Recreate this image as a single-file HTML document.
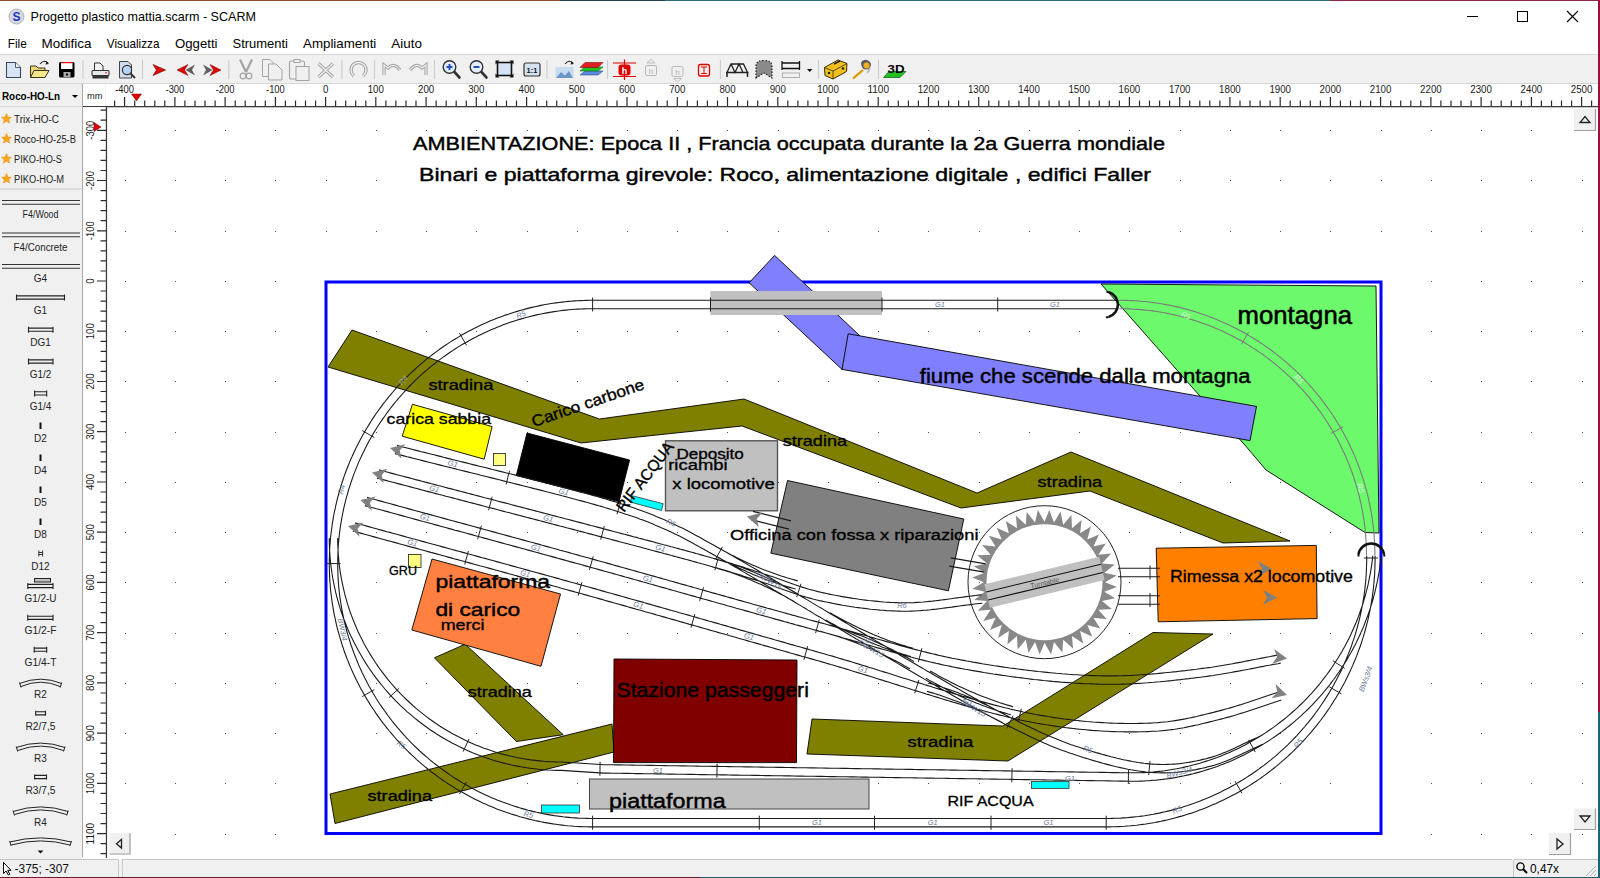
<!DOCTYPE html>
<html><head><meta charset="utf-8"><style>
html,body{margin:0;padding:0;background:#fff;overflow:hidden;}
svg{display:block;font-family:"Liberation Sans", sans-serif;}
</style></head><body>
<svg width="1600" height="878" viewBox="0 0 1600 878">
<rect x="0" y="0" width="1600" height="878" fill="#ffffff"/>
<rect x="0" y="0" width="560" height="1" fill="#8a4e30"/><rect x="560" y="0" width="105" height="1" fill="#24404a"/><rect x="665" y="0" width="665" height="1" fill="#2f6c80"/><rect x="1330" y="0" width="270" height="1" fill="#8c2848"/>
<rect x="1598" y="0" width="2" height="712" fill="#9a1038"/><rect x="1598" y="712" width="2" height="166" fill="#1e6478"/>
<rect x="0" y="877" width="700" height="1" fill="#6a1a30"/><rect x="700" y="877" width="900" height="1" fill="#1a5a70"/>
<circle cx="16.5" cy="16.5" r="7.5" fill="#d8d8e0" stroke="#b0b0b8" stroke-width="1"/>
<text x="16.5" y="21" font-size="12" font-weight="bold" fill="#2030c0" text-anchor="middle" style="font-family:"Liberation Sans", sans-serif">S</text>
<text x="30.5" y="21.0" font-size="12.4" fill="#000" text-anchor="start" font-weight="normal" textLength="225.5" lengthAdjust="spacingAndGlyphs">Progetto plastico mattia.scarm - SCARM</text>
<rect x="1467" y="16" width="11" height="1" fill="#000"/>
<rect x="1517.5" y="11.5" width="10" height="10" fill="none" stroke="#000" stroke-width="1"/>
<path d="M1567,11 L1578,22 M1578,11 L1567,22" stroke="#000" stroke-width="1.1"/>
<text x="7.8" y="48.0" font-size="12.6" fill="#000" text-anchor="start" font-weight="normal" textLength="19.0" lengthAdjust="spacingAndGlyphs">File</text>
<text x="41.5" y="48.0" font-size="12.6" fill="#000" text-anchor="start" font-weight="normal" textLength="50.0" lengthAdjust="spacingAndGlyphs">Modifica</text>
<text x="106.8" y="48.0" font-size="12.6" fill="#000" text-anchor="start" font-weight="normal" textLength="52.7" lengthAdjust="spacingAndGlyphs">Visualizza</text>
<text x="175.0" y="48.0" font-size="12.6" fill="#000" text-anchor="start" font-weight="normal" textLength="42.5" lengthAdjust="spacingAndGlyphs">Oggetti</text>
<text x="232.5" y="48.0" font-size="12.6" fill="#000" text-anchor="start" font-weight="normal" textLength="55.5" lengthAdjust="spacingAndGlyphs">Strumenti</text>
<text x="303.0" y="48.0" font-size="12.6" fill="#000" text-anchor="start" font-weight="normal" textLength="73.3" lengthAdjust="spacingAndGlyphs">Ampliamenti</text>
<text x="391.3" y="48.0" font-size="12.6" fill="#000" text-anchor="start" font-weight="normal" textLength="30.7" lengthAdjust="spacingAndGlyphs">Aiuto</text>
<rect x="0" y="54" width="1598" height="30" fill="#f0f0f0"/>
<rect x="0" y="54" width="1598" height="1" fill="#dadada"/>
<rect x="0" y="83" width="1598" height="1" fill="#d6d6d6"/>
<rect x="82.5" y="60" width="1" height="19" fill="#c8c8c8"/>
<rect x="142.0" y="60" width="1" height="19" fill="#c8c8c8"/>
<rect x="228.3" y="60" width="1" height="19" fill="#c8c8c8"/>
<rect x="341.4" y="60" width="1" height="19" fill="#c8c8c8"/>
<rect x="374.1" y="60" width="1" height="19" fill="#c8c8c8"/>
<rect x="434.0" y="60" width="1" height="19" fill="#c8c8c8"/>
<rect x="546.5" y="60" width="1" height="19" fill="#c8c8c8"/>
<rect x="607.1" y="60" width="1" height="19" fill="#c8c8c8"/>
<rect x="719.9" y="60" width="1" height="19" fill="#c8c8c8"/>
<rect x="818.0" y="60" width="1" height="19" fill="#c8c8c8"/>
<rect x="878.0" y="60" width="1" height="19" fill="#c8c8c8"/>
<rect x="0" y="84" width="82" height="775" fill="#f0f0f0"/>
<rect x="82" y="84" width="1" height="773" fill="#a8a8a8"/>
<text x="2.0" y="100.0" font-size="11" fill="#000" text-anchor="start" font-weight="bold" textLength="58.0" lengthAdjust="spacingAndGlyphs">Roco-HO-Ln</text>
<path d="M72,95 L78,95 L75,98 Z" fill="#000"/>
<rect x="0" y="106" width="82" height="1" fill="#d8d8d8"/>
<rect x="83" y="84" width="23" height="22" fill="#ffffff"/>
<rect x="105.8" y="84" width="1.3" height="22" fill="#c8c8c8"/>
<text x="87.0" y="99.0" font-size="9.5" fill="#222" text-anchor="start" font-weight="normal" textLength="15.5" lengthAdjust="spacingAndGlyphs">mm</text>
<rect x="106" y="84" width="1492" height="22" fill="#ffffff"/>
<rect x="83" y="106" width="1515" height="1.3" fill="#3c3c3c"/>
<text x="124.6" y="93.0" font-size="10" fill="#1a1a1a" text-anchor="middle" font-weight="normal" textLength="18.8" lengthAdjust="spacingAndGlyphs">-400</text>
<text x="174.9" y="93.0" font-size="10" fill="#1a1a1a" text-anchor="middle" font-weight="normal" textLength="18.8" lengthAdjust="spacingAndGlyphs">-300</text>
<text x="225.1" y="93.0" font-size="10" fill="#1a1a1a" text-anchor="middle" font-weight="normal" textLength="18.8" lengthAdjust="spacingAndGlyphs">-200</text>
<text x="275.4" y="93.0" font-size="10" fill="#1a1a1a" text-anchor="middle" font-weight="normal" textLength="18.8" lengthAdjust="spacingAndGlyphs">-100</text>
<text x="325.6" y="93.0" font-size="10" fill="#1a1a1a" text-anchor="middle" font-weight="normal" textLength="5.4" lengthAdjust="spacingAndGlyphs">0</text>
<text x="375.8" y="93.0" font-size="10" fill="#1a1a1a" text-anchor="middle" font-weight="normal" textLength="16.2" lengthAdjust="spacingAndGlyphs">100</text>
<text x="426.1" y="93.0" font-size="10" fill="#1a1a1a" text-anchor="middle" font-weight="normal" textLength="16.2" lengthAdjust="spacingAndGlyphs">200</text>
<text x="476.3" y="93.0" font-size="10" fill="#1a1a1a" text-anchor="middle" font-weight="normal" textLength="16.2" lengthAdjust="spacingAndGlyphs">300</text>
<text x="526.6" y="93.0" font-size="10" fill="#1a1a1a" text-anchor="middle" font-weight="normal" textLength="16.2" lengthAdjust="spacingAndGlyphs">400</text>
<text x="576.8" y="93.0" font-size="10" fill="#1a1a1a" text-anchor="middle" font-weight="normal" textLength="16.2" lengthAdjust="spacingAndGlyphs">500</text>
<text x="627.0" y="93.0" font-size="10" fill="#1a1a1a" text-anchor="middle" font-weight="normal" textLength="16.2" lengthAdjust="spacingAndGlyphs">600</text>
<text x="677.3" y="93.0" font-size="10" fill="#1a1a1a" text-anchor="middle" font-weight="normal" textLength="16.2" lengthAdjust="spacingAndGlyphs">700</text>
<text x="727.5" y="93.0" font-size="10" fill="#1a1a1a" text-anchor="middle" font-weight="normal" textLength="16.2" lengthAdjust="spacingAndGlyphs">800</text>
<text x="777.8" y="93.0" font-size="10" fill="#1a1a1a" text-anchor="middle" font-weight="normal" textLength="16.2" lengthAdjust="spacingAndGlyphs">900</text>
<text x="828.0" y="93.0" font-size="10" fill="#1a1a1a" text-anchor="middle" font-weight="normal" textLength="21.6" lengthAdjust="spacingAndGlyphs">1000</text>
<text x="878.2" y="93.0" font-size="10" fill="#1a1a1a" text-anchor="middle" font-weight="normal" textLength="21.6" lengthAdjust="spacingAndGlyphs">1100</text>
<text x="928.5" y="93.0" font-size="10" fill="#1a1a1a" text-anchor="middle" font-weight="normal" textLength="21.6" lengthAdjust="spacingAndGlyphs">1200</text>
<text x="978.7" y="93.0" font-size="10" fill="#1a1a1a" text-anchor="middle" font-weight="normal" textLength="21.6" lengthAdjust="spacingAndGlyphs">1300</text>
<text x="1029.0" y="93.0" font-size="10" fill="#1a1a1a" text-anchor="middle" font-weight="normal" textLength="21.6" lengthAdjust="spacingAndGlyphs">1400</text>
<text x="1079.2" y="93.0" font-size="10" fill="#1a1a1a" text-anchor="middle" font-weight="normal" textLength="21.6" lengthAdjust="spacingAndGlyphs">1500</text>
<text x="1129.4" y="93.0" font-size="10" fill="#1a1a1a" text-anchor="middle" font-weight="normal" textLength="21.6" lengthAdjust="spacingAndGlyphs">1600</text>
<text x="1179.7" y="93.0" font-size="10" fill="#1a1a1a" text-anchor="middle" font-weight="normal" textLength="21.6" lengthAdjust="spacingAndGlyphs">1700</text>
<text x="1229.9" y="93.0" font-size="10" fill="#1a1a1a" text-anchor="middle" font-weight="normal" textLength="21.6" lengthAdjust="spacingAndGlyphs">1800</text>
<text x="1280.2" y="93.0" font-size="10" fill="#1a1a1a" text-anchor="middle" font-weight="normal" textLength="21.6" lengthAdjust="spacingAndGlyphs">1900</text>
<text x="1330.4" y="93.0" font-size="10" fill="#1a1a1a" text-anchor="middle" font-weight="normal" textLength="21.6" lengthAdjust="spacingAndGlyphs">2000</text>
<text x="1380.6" y="93.0" font-size="10" fill="#1a1a1a" text-anchor="middle" font-weight="normal" textLength="21.6" lengthAdjust="spacingAndGlyphs">2100</text>
<text x="1430.9" y="93.0" font-size="10" fill="#1a1a1a" text-anchor="middle" font-weight="normal" textLength="21.6" lengthAdjust="spacingAndGlyphs">2200</text>
<text x="1481.1" y="93.0" font-size="10" fill="#1a1a1a" text-anchor="middle" font-weight="normal" textLength="21.6" lengthAdjust="spacingAndGlyphs">2300</text>
<text x="1531.4" y="93.0" font-size="10" fill="#1a1a1a" text-anchor="middle" font-weight="normal" textLength="21.6" lengthAdjust="spacingAndGlyphs">2400</text>
<text x="1581.6" y="93.0" font-size="10" fill="#1a1a1a" text-anchor="middle" font-weight="normal" textLength="21.6" lengthAdjust="spacingAndGlyphs">2500</text>
<path d="M114.6,100.5V106 M124.6,97V106 M134.7,100.5V106 M144.7,100.5V106 M154.8,100.5V106 M164.8,100.5V106 M174.9,97V106 M184.9,100.5V106 M195.0,100.5V106 M205.0,100.5V106 M215.1,100.5V106 M225.1,97V106 M235.2,100.5V106 M245.2,100.5V106 M255.3,100.5V106 M265.3,100.5V106 M275.4,97V106 M285.4,100.5V106 M295.5,100.5V106 M305.5,100.5V106 M315.6,100.5V106 M325.6,97V106 M335.6,100.5V106 M345.7,100.5V106 M355.7,100.5V106 M365.8,100.5V106 M375.8,97V106 M385.9,100.5V106 M395.9,100.5V106 M406.0,100.5V106 M416.0,100.5V106 M426.1,97V106 M436.1,100.5V106 M446.2,100.5V106 M456.2,100.5V106 M466.3,100.5V106 M476.3,97V106 M486.4,100.5V106 M496.4,100.5V106 M506.5,100.5V106 M516.5,100.5V106 M526.6,97V106 M536.6,100.5V106 M546.7,100.5V106 M556.7,100.5V106 M566.8,100.5V106 M576.8,97V106 M586.8,100.5V106 M596.9,100.5V106 M606.9,100.5V106 M617.0,100.5V106 M627.0,97V106 M637.1,100.5V106 M647.1,100.5V106 M657.2,100.5V106 M667.2,100.5V106 M677.3,97V106 M687.3,100.5V106 M697.4,100.5V106 M707.4,100.5V106 M717.5,100.5V106 M727.5,97V106 M737.6,100.5V106 M747.6,100.5V106 M757.7,100.5V106 M767.7,100.5V106 M777.8,97V106 M787.8,100.5V106 M797.9,100.5V106 M807.9,100.5V106 M818.0,100.5V106 M828.0,97V106 M838.0,100.5V106 M848.1,100.5V106 M858.1,100.5V106 M868.2,100.5V106 M878.2,97V106 M888.3,100.5V106 M898.3,100.5V106 M908.4,100.5V106 M918.4,100.5V106 M928.5,97V106 M938.5,100.5V106 M948.6,100.5V106 M958.6,100.5V106 M968.7,100.5V106 M978.7,97V106 M988.8,100.5V106 M998.8,100.5V106 M1008.9,100.5V106 M1018.9,100.5V106 M1029.0,97V106 M1039.0,100.5V106 M1049.1,100.5V106 M1059.1,100.5V106 M1069.2,100.5V106 M1079.2,97V106 M1089.2,100.5V106 M1099.3,100.5V106 M1109.3,100.5V106 M1119.4,100.5V106 M1129.4,97V106 M1139.5,100.5V106 M1149.5,100.5V106 M1159.6,100.5V106 M1169.6,100.5V106 M1179.7,97V106 M1189.7,100.5V106 M1199.8,100.5V106 M1209.8,100.5V106 M1219.9,100.5V106 M1229.9,97V106 M1240.0,100.5V106 M1250.0,100.5V106 M1260.1,100.5V106 M1270.1,100.5V106 M1280.2,97V106 M1290.2,100.5V106 M1300.3,100.5V106 M1310.3,100.5V106 M1320.4,100.5V106 M1330.4,97V106 M1340.4,100.5V106 M1350.5,100.5V106 M1360.5,100.5V106 M1370.6,100.5V106 M1380.6,97V106 M1390.7,100.5V106 M1400.7,100.5V106 M1410.8,100.5V106 M1420.8,100.5V106 M1430.9,97V106 M1440.9,100.5V106 M1451.0,100.5V106 M1461.0,100.5V106 M1471.1,100.5V106 M1481.1,97V106 M1491.2,100.5V106 M1501.2,100.5V106 M1511.3,100.5V106 M1521.3,100.5V106 M1531.4,97V106 M1541.4,100.5V106 M1551.5,100.5V106 M1561.5,100.5V106 M1571.6,100.5V106 M1581.6,97V106 M1591.6,100.5V106" stroke="#2c2c2c" stroke-width="1.2"/>
<path d="M131.5,94 L141.5,94 L136.5,101 Z" fill="#e00000" stroke="#600" stroke-width="0.5"/>
<rect x="83" y="107" width="23" height="751" fill="#ffffff"/>
<rect x="105.8" y="106" width="1.3" height="752" fill="#3c3c3c"/>
<text transform="translate(93.5,130.3) rotate(-90)" x="0" y="0" font-size="10" fill="#1a1a1a" text-anchor="middle" textLength="18.8" lengthAdjust="spacingAndGlyphs">-300</text>
<text transform="translate(93.5,180.5) rotate(-90)" x="0" y="0" font-size="10" fill="#1a1a1a" text-anchor="middle" textLength="18.8" lengthAdjust="spacingAndGlyphs">-200</text>
<text transform="translate(93.5,230.8) rotate(-90)" x="0" y="0" font-size="10" fill="#1a1a1a" text-anchor="middle" textLength="18.8" lengthAdjust="spacingAndGlyphs">-100</text>
<text transform="translate(93.5,281.0) rotate(-90)" x="0" y="0" font-size="10" fill="#1a1a1a" text-anchor="middle" textLength="5.4" lengthAdjust="spacingAndGlyphs">0</text>
<text transform="translate(93.5,331.2) rotate(-90)" x="0" y="0" font-size="10" fill="#1a1a1a" text-anchor="middle" textLength="16.2" lengthAdjust="spacingAndGlyphs">100</text>
<text transform="translate(93.5,381.5) rotate(-90)" x="0" y="0" font-size="10" fill="#1a1a1a" text-anchor="middle" textLength="16.2" lengthAdjust="spacingAndGlyphs">200</text>
<text transform="translate(93.5,431.7) rotate(-90)" x="0" y="0" font-size="10" fill="#1a1a1a" text-anchor="middle" textLength="16.2" lengthAdjust="spacingAndGlyphs">300</text>
<text transform="translate(93.5,482.0) rotate(-90)" x="0" y="0" font-size="10" fill="#1a1a1a" text-anchor="middle" textLength="16.2" lengthAdjust="spacingAndGlyphs">400</text>
<text transform="translate(93.5,532.2) rotate(-90)" x="0" y="0" font-size="10" fill="#1a1a1a" text-anchor="middle" textLength="16.2" lengthAdjust="spacingAndGlyphs">500</text>
<text transform="translate(93.5,582.4) rotate(-90)" x="0" y="0" font-size="10" fill="#1a1a1a" text-anchor="middle" textLength="16.2" lengthAdjust="spacingAndGlyphs">600</text>
<text transform="translate(93.5,632.7) rotate(-90)" x="0" y="0" font-size="10" fill="#1a1a1a" text-anchor="middle" textLength="16.2" lengthAdjust="spacingAndGlyphs">700</text>
<text transform="translate(93.5,682.9) rotate(-90)" x="0" y="0" font-size="10" fill="#1a1a1a" text-anchor="middle" textLength="16.2" lengthAdjust="spacingAndGlyphs">800</text>
<text transform="translate(93.5,733.2) rotate(-90)" x="0" y="0" font-size="10" fill="#1a1a1a" text-anchor="middle" textLength="16.2" lengthAdjust="spacingAndGlyphs">900</text>
<text transform="translate(93.5,783.4) rotate(-90)" x="0" y="0" font-size="10" fill="#1a1a1a" text-anchor="middle" textLength="21.6" lengthAdjust="spacingAndGlyphs">1000</text>
<text transform="translate(93.5,833.6) rotate(-90)" x="0" y="0" font-size="10" fill="#1a1a1a" text-anchor="middle" textLength="21.6" lengthAdjust="spacingAndGlyphs">1100</text>
<path d="M100.5,110.2H106 M100.5,120.2H106 M97,130.3H106 M100.5,140.3H106 M100.5,150.4H106 M100.5,160.4H106 M100.5,170.5H106 M97,180.5H106 M100.5,190.6H106 M100.5,200.6H106 M100.5,210.7H106 M100.5,220.7H106 M97,230.8H106 M100.5,240.8H106 M100.5,250.9H106 M100.5,260.9H106 M100.5,271.0H106 M97,281.0H106 M100.5,291.0H106 M100.5,301.1H106 M100.5,311.1H106 M100.5,321.2H106 M97,331.2H106 M100.5,341.3H106 M100.5,351.3H106 M100.5,361.4H106 M100.5,371.4H106 M97,381.5H106 M100.5,391.5H106 M100.5,401.6H106 M100.5,411.6H106 M100.5,421.7H106 M97,431.7H106 M100.5,441.8H106 M100.5,451.8H106 M100.5,461.9H106 M100.5,471.9H106 M97,482.0H106 M100.5,492.0H106 M100.5,502.1H106 M100.5,512.1H106 M100.5,522.2H106 M97,532.2H106 M100.5,542.2H106 M100.5,552.3H106 M100.5,562.3H106 M100.5,572.4H106 M97,582.4H106 M100.5,592.5H106 M100.5,602.5H106 M100.5,612.6H106 M100.5,622.6H106 M97,632.7H106 M100.5,642.7H106 M100.5,652.8H106 M100.5,662.8H106 M100.5,672.9H106 M97,682.9H106 M100.5,693.0H106 M100.5,703.0H106 M100.5,713.1H106 M100.5,723.1H106 M97,733.2H106 M100.5,743.2H106 M100.5,753.3H106 M100.5,763.3H106 M100.5,773.4H106 M97,783.4H106 M100.5,793.4H106 M100.5,803.5H106 M100.5,813.5H106 M100.5,823.6H106 M97,833.6H106 M100.5,843.7H106 M100.5,853.7H106" stroke="#2c2c2c" stroke-width="1.2"/>
<path d="M94,122.5 L94,131.5 L101,127 Z" fill="#e00000" stroke="#600" stroke-width="0.5"/>
<clipPath id="cv"><rect x="107" y="107.3" width="1491" height="750.5"/></clipPath>
<g clip-path="url(#cv)">
<path d="M125,130h1v1h-1zM125,180h1v1h-1zM125,231h1v1h-1zM125,281h1v1h-1zM125,331h1v1h-1zM125,381h1v1h-1zM125,432h1v1h-1zM125,482h1v1h-1zM125,532h1v1h-1zM125,582h1v1h-1zM125,633h1v1h-1zM125,683h1v1h-1zM125,733h1v1h-1zM125,783h1v1h-1zM125,834h1v1h-1zM175,130h1v1h-1zM175,180h1v1h-1zM175,231h1v1h-1zM175,281h1v1h-1zM175,331h1v1h-1zM175,381h1v1h-1zM175,432h1v1h-1zM175,482h1v1h-1zM175,532h1v1h-1zM175,582h1v1h-1zM175,633h1v1h-1zM175,683h1v1h-1zM175,733h1v1h-1zM175,783h1v1h-1zM175,834h1v1h-1zM225,130h1v1h-1zM225,180h1v1h-1zM225,231h1v1h-1zM225,281h1v1h-1zM225,331h1v1h-1zM225,381h1v1h-1zM225,432h1v1h-1zM225,482h1v1h-1zM225,532h1v1h-1zM225,582h1v1h-1zM225,633h1v1h-1zM225,683h1v1h-1zM225,733h1v1h-1zM225,783h1v1h-1zM225,834h1v1h-1zM275,130h1v1h-1zM275,180h1v1h-1zM275,231h1v1h-1zM275,281h1v1h-1zM275,331h1v1h-1zM275,381h1v1h-1zM275,432h1v1h-1zM275,482h1v1h-1zM275,532h1v1h-1zM275,582h1v1h-1zM275,633h1v1h-1zM275,683h1v1h-1zM275,733h1v1h-1zM275,783h1v1h-1zM275,834h1v1h-1zM326,130h1v1h-1zM326,180h1v1h-1zM326,231h1v1h-1zM326,281h1v1h-1zM326,331h1v1h-1zM326,381h1v1h-1zM326,432h1v1h-1zM326,482h1v1h-1zM326,532h1v1h-1zM326,582h1v1h-1zM326,633h1v1h-1zM326,683h1v1h-1zM326,733h1v1h-1zM326,783h1v1h-1zM326,834h1v1h-1zM376,130h1v1h-1zM376,180h1v1h-1zM376,231h1v1h-1zM376,281h1v1h-1zM376,331h1v1h-1zM376,381h1v1h-1zM376,432h1v1h-1zM376,482h1v1h-1zM376,532h1v1h-1zM376,582h1v1h-1zM376,633h1v1h-1zM376,683h1v1h-1zM376,733h1v1h-1zM376,783h1v1h-1zM376,834h1v1h-1zM426,130h1v1h-1zM426,180h1v1h-1zM426,231h1v1h-1zM426,281h1v1h-1zM426,331h1v1h-1zM426,381h1v1h-1zM426,432h1v1h-1zM426,482h1v1h-1zM426,532h1v1h-1zM426,582h1v1h-1zM426,633h1v1h-1zM426,683h1v1h-1zM426,733h1v1h-1zM426,783h1v1h-1zM426,834h1v1h-1zM476,130h1v1h-1zM476,180h1v1h-1zM476,231h1v1h-1zM476,281h1v1h-1zM476,331h1v1h-1zM476,381h1v1h-1zM476,432h1v1h-1zM476,482h1v1h-1zM476,532h1v1h-1zM476,582h1v1h-1zM476,633h1v1h-1zM476,683h1v1h-1zM476,733h1v1h-1zM476,783h1v1h-1zM476,834h1v1h-1zM527,130h1v1h-1zM527,180h1v1h-1zM527,231h1v1h-1zM527,281h1v1h-1zM527,331h1v1h-1zM527,381h1v1h-1zM527,432h1v1h-1zM527,482h1v1h-1zM527,532h1v1h-1zM527,582h1v1h-1zM527,633h1v1h-1zM527,683h1v1h-1zM527,733h1v1h-1zM527,783h1v1h-1zM527,834h1v1h-1zM577,130h1v1h-1zM577,180h1v1h-1zM577,231h1v1h-1zM577,281h1v1h-1zM577,331h1v1h-1zM577,381h1v1h-1zM577,432h1v1h-1zM577,482h1v1h-1zM577,532h1v1h-1zM577,582h1v1h-1zM577,633h1v1h-1zM577,683h1v1h-1zM577,733h1v1h-1zM577,783h1v1h-1zM577,834h1v1h-1zM627,130h1v1h-1zM627,180h1v1h-1zM627,231h1v1h-1zM627,281h1v1h-1zM627,331h1v1h-1zM627,381h1v1h-1zM627,432h1v1h-1zM627,482h1v1h-1zM627,532h1v1h-1zM627,582h1v1h-1zM627,633h1v1h-1zM627,683h1v1h-1zM627,733h1v1h-1zM627,783h1v1h-1zM627,834h1v1h-1zM677,130h1v1h-1zM677,180h1v1h-1zM677,231h1v1h-1zM677,281h1v1h-1zM677,331h1v1h-1zM677,381h1v1h-1zM677,432h1v1h-1zM677,482h1v1h-1zM677,532h1v1h-1zM677,582h1v1h-1zM677,633h1v1h-1zM677,683h1v1h-1zM677,733h1v1h-1zM677,783h1v1h-1zM677,834h1v1h-1zM727,130h1v1h-1zM727,180h1v1h-1zM727,231h1v1h-1zM727,281h1v1h-1zM727,331h1v1h-1zM727,381h1v1h-1zM727,432h1v1h-1zM727,482h1v1h-1zM727,532h1v1h-1zM727,582h1v1h-1zM727,633h1v1h-1zM727,683h1v1h-1zM727,733h1v1h-1zM727,783h1v1h-1zM727,834h1v1h-1zM778,130h1v1h-1zM778,180h1v1h-1zM778,231h1v1h-1zM778,281h1v1h-1zM778,331h1v1h-1zM778,381h1v1h-1zM778,432h1v1h-1zM778,482h1v1h-1zM778,532h1v1h-1zM778,582h1v1h-1zM778,633h1v1h-1zM778,683h1v1h-1zM778,733h1v1h-1zM778,783h1v1h-1zM778,834h1v1h-1zM828,130h1v1h-1zM828,180h1v1h-1zM828,231h1v1h-1zM828,281h1v1h-1zM828,331h1v1h-1zM828,381h1v1h-1zM828,432h1v1h-1zM828,482h1v1h-1zM828,532h1v1h-1zM828,582h1v1h-1zM828,633h1v1h-1zM828,683h1v1h-1zM828,733h1v1h-1zM828,783h1v1h-1zM828,834h1v1h-1zM878,130h1v1h-1zM878,180h1v1h-1zM878,231h1v1h-1zM878,281h1v1h-1zM878,331h1v1h-1zM878,381h1v1h-1zM878,432h1v1h-1zM878,482h1v1h-1zM878,532h1v1h-1zM878,582h1v1h-1zM878,633h1v1h-1zM878,683h1v1h-1zM878,733h1v1h-1zM878,783h1v1h-1zM878,834h1v1h-1zM928,130h1v1h-1zM928,180h1v1h-1zM928,231h1v1h-1zM928,281h1v1h-1zM928,331h1v1h-1zM928,381h1v1h-1zM928,432h1v1h-1zM928,482h1v1h-1zM928,532h1v1h-1zM928,582h1v1h-1zM928,633h1v1h-1zM928,683h1v1h-1zM928,733h1v1h-1zM928,783h1v1h-1zM928,834h1v1h-1zM979,130h1v1h-1zM979,180h1v1h-1zM979,231h1v1h-1zM979,281h1v1h-1zM979,331h1v1h-1zM979,381h1v1h-1zM979,432h1v1h-1zM979,482h1v1h-1zM979,532h1v1h-1zM979,582h1v1h-1zM979,633h1v1h-1zM979,683h1v1h-1zM979,733h1v1h-1zM979,783h1v1h-1zM979,834h1v1h-1zM1029,130h1v1h-1zM1029,180h1v1h-1zM1029,231h1v1h-1zM1029,281h1v1h-1zM1029,331h1v1h-1zM1029,381h1v1h-1zM1029,432h1v1h-1zM1029,482h1v1h-1zM1029,532h1v1h-1zM1029,582h1v1h-1zM1029,633h1v1h-1zM1029,683h1v1h-1zM1029,733h1v1h-1zM1029,783h1v1h-1zM1029,834h1v1h-1zM1079,130h1v1h-1zM1079,180h1v1h-1zM1079,231h1v1h-1zM1079,281h1v1h-1zM1079,331h1v1h-1zM1079,381h1v1h-1zM1079,432h1v1h-1zM1079,482h1v1h-1zM1079,532h1v1h-1zM1079,582h1v1h-1zM1079,633h1v1h-1zM1079,683h1v1h-1zM1079,733h1v1h-1zM1079,783h1v1h-1zM1079,834h1v1h-1zM1129,130h1v1h-1zM1129,180h1v1h-1zM1129,231h1v1h-1zM1129,281h1v1h-1zM1129,331h1v1h-1zM1129,381h1v1h-1zM1129,432h1v1h-1zM1129,482h1v1h-1zM1129,532h1v1h-1zM1129,582h1v1h-1zM1129,633h1v1h-1zM1129,683h1v1h-1zM1129,733h1v1h-1zM1129,783h1v1h-1zM1129,834h1v1h-1zM1180,130h1v1h-1zM1180,180h1v1h-1zM1180,231h1v1h-1zM1180,281h1v1h-1zM1180,331h1v1h-1zM1180,381h1v1h-1zM1180,432h1v1h-1zM1180,482h1v1h-1zM1180,532h1v1h-1zM1180,582h1v1h-1zM1180,633h1v1h-1zM1180,683h1v1h-1zM1180,733h1v1h-1zM1180,783h1v1h-1zM1180,834h1v1h-1zM1230,130h1v1h-1zM1230,180h1v1h-1zM1230,231h1v1h-1zM1230,281h1v1h-1zM1230,331h1v1h-1zM1230,381h1v1h-1zM1230,432h1v1h-1zM1230,482h1v1h-1zM1230,532h1v1h-1zM1230,582h1v1h-1zM1230,633h1v1h-1zM1230,683h1v1h-1zM1230,733h1v1h-1zM1230,783h1v1h-1zM1230,834h1v1h-1zM1280,130h1v1h-1zM1280,180h1v1h-1zM1280,231h1v1h-1zM1280,281h1v1h-1zM1280,331h1v1h-1zM1280,381h1v1h-1zM1280,432h1v1h-1zM1280,482h1v1h-1zM1280,532h1v1h-1zM1280,582h1v1h-1zM1280,633h1v1h-1zM1280,683h1v1h-1zM1280,733h1v1h-1zM1280,783h1v1h-1zM1280,834h1v1h-1zM1330,130h1v1h-1zM1330,180h1v1h-1zM1330,231h1v1h-1zM1330,281h1v1h-1zM1330,331h1v1h-1zM1330,381h1v1h-1zM1330,432h1v1h-1zM1330,482h1v1h-1zM1330,532h1v1h-1zM1330,582h1v1h-1zM1330,633h1v1h-1zM1330,683h1v1h-1zM1330,733h1v1h-1zM1330,783h1v1h-1zM1330,834h1v1h-1zM1381,130h1v1h-1zM1381,180h1v1h-1zM1381,231h1v1h-1zM1381,281h1v1h-1zM1381,331h1v1h-1zM1381,381h1v1h-1zM1381,432h1v1h-1zM1381,482h1v1h-1zM1381,532h1v1h-1zM1381,582h1v1h-1zM1381,633h1v1h-1zM1381,683h1v1h-1zM1381,733h1v1h-1zM1381,783h1v1h-1zM1381,834h1v1h-1zM1431,130h1v1h-1zM1431,180h1v1h-1zM1431,231h1v1h-1zM1431,281h1v1h-1zM1431,331h1v1h-1zM1431,381h1v1h-1zM1431,432h1v1h-1zM1431,482h1v1h-1zM1431,532h1v1h-1zM1431,582h1v1h-1zM1431,633h1v1h-1zM1431,683h1v1h-1zM1431,733h1v1h-1zM1431,783h1v1h-1zM1431,834h1v1h-1zM1481,130h1v1h-1zM1481,180h1v1h-1zM1481,231h1v1h-1zM1481,281h1v1h-1zM1481,331h1v1h-1zM1481,381h1v1h-1zM1481,432h1v1h-1zM1481,482h1v1h-1zM1481,532h1v1h-1zM1481,582h1v1h-1zM1481,633h1v1h-1zM1481,683h1v1h-1zM1481,733h1v1h-1zM1481,783h1v1h-1zM1481,834h1v1h-1zM1531,130h1v1h-1zM1531,180h1v1h-1zM1531,231h1v1h-1zM1531,281h1v1h-1zM1531,331h1v1h-1zM1531,381h1v1h-1zM1531,432h1v1h-1zM1531,482h1v1h-1zM1531,532h1v1h-1zM1531,582h1v1h-1zM1531,633h1v1h-1zM1531,683h1v1h-1zM1531,733h1v1h-1zM1531,783h1v1h-1zM1531,834h1v1h-1zM1582,130h1v1h-1zM1582,180h1v1h-1zM1582,231h1v1h-1zM1582,281h1v1h-1zM1582,331h1v1h-1zM1582,381h1v1h-1zM1582,432h1v1h-1zM1582,482h1v1h-1zM1582,532h1v1h-1zM1582,582h1v1h-1zM1582,633h1v1h-1zM1582,683h1v1h-1zM1582,733h1v1h-1zM1582,783h1v1h-1zM1582,834h1v1h-1z" fill="#555"/>
<rect x="326" y="282" width="1055" height="551.5" fill="none" stroke="#0000ff" stroke-width="3"/>
<polygon points="1101.0,284.0 1376.0,286.0 1379.0,533.0 1365.0,532.5 1266.0,470.0 1244.0,444.0 1199.0,395.0" fill="#6cfa6c" stroke="#000" stroke-width="0.9" stroke-linejoin="miter"/>
<polygon points="774.6,255.4 749.1,282.8 842.0,369.4 860.7,336.6" fill="#8080ff" stroke="#000" stroke-width="0.9" stroke-linejoin="miter"/>
<polygon points="848.2,333.8 842.0,369.4 1250.0,440.6 1256.5,406.4" fill="#8080ff" stroke="#000" stroke-width="0.9" stroke-linejoin="miter"/>
<polygon points="352.0,330.0 599.4,419.0 744.0,399.0 977.0,493.0 1071.0,452.0 1290.0,541.0 1223.0,543.0 1090.0,491.0 961.0,508.0 742.0,426.0 581.0,443.0 328.0,367.0" fill="#808000" stroke="#000" stroke-width="0.9" stroke-linejoin="miter"/>
<polygon points="812.0,719.0 1003.0,726.0 1153.0,632.5 1213.0,634.0 1008.0,761.0 807.0,754.0" fill="#808000" stroke="#000" stroke-width="0.9" stroke-linejoin="miter"/>
<polygon points="330.0,794.0 612.0,724.0 614.0,752.0 335.0,823.5" fill="#808000" stroke="#000" stroke-width="0.9" stroke-linejoin="miter"/>
<polygon points="434.4,657.8 465.2,644.2 563.2,734.7 516.4,741.5" fill="#808000" stroke="#000" stroke-width="0.9" stroke-linejoin="miter"/>
<polygon points="412.4,404.3 492.1,426.6 484.2,459.2 402.2,436.2" fill="#ffff00" stroke="#000" stroke-width="0.9" stroke-linejoin="miter"/>
<rect x="493.5" y="453.5" width="12" height="12" fill="#ffff80" stroke="#333" stroke-width="0.9"/>
<polygon points="527.0,433.0 629.6,460.0 619.0,501.7 516.3,475.5" fill="#000000" stroke="#000" stroke-width="0.9" stroke-linejoin="miter"/>
<rect x="665.5" y="440.8" width="112" height="70" fill="#c0c0c0" stroke="#555" stroke-width="1.4"/>
<polygon points="787.5,480.5 963.8,519.0 948.4,590.8 770.8,553.2" fill="#808080" stroke="#000" stroke-width="0.9" stroke-linejoin="miter"/>
<polygon points="1156.2,548.2 1316.3,545.4 1317.1,618.6 1158.2,621.8" fill="#ff8000" stroke="#000" stroke-width="0.9" stroke-linejoin="miter"/>
<polygon points="432.0,559.0 560.5,594.0 541.0,666.3 411.8,630.0" fill="#ff8040" stroke="#000" stroke-width="0.9" stroke-linejoin="miter"/>
<rect x="408.5" y="554.5" width="12.5" height="13" fill="#ffff80" stroke="#333" stroke-width="0.9"/>
<polygon points="614.0,659.0 797.0,660.0 796.5,762.6 613.5,762.6" fill="#800000" stroke="#000" stroke-width="0.9" stroke-linejoin="miter"/>
<rect x="589.5" y="779" width="279.5" height="30" fill="#c0c0c0" stroke="#444" stroke-width="1"/>
<rect x="710.3" y="291" width="171.7" height="24" fill="#c0c0c0"/>
<rect x="541.5" y="805" width="38" height="8" fill="#00ffff" stroke="#333" stroke-width="0.8"/>
<rect x="1031.5" y="781.5" width="37.5" height="7" fill="#00ffff" stroke="#333" stroke-width="0.8"/>
<polygon points="632.5,495.8 663.2,503.7 661.5,510.5 630.0,502.0" fill="#00ffff" stroke="#333" stroke-width="0.8" stroke-linejoin="miter"/>
<circle cx="1044.5" cy="582.2" r="76.5" fill="none" stroke="#222" stroke-width="1"/>
<polygon points="1105.0,582.2 1116.8,587.0 1104.3,591.7 1115.2,598.2 1102.0,600.9 1111.8,609.1 1098.4,609.7 1106.8,619.3 1093.4,617.8 1100.2,628.6 1087.3,625.0 1092.3,636.7 1080.1,631.1 1083.2,643.5 1072.0,636.1 1073.1,648.8 1063.2,639.7 1062.3,652.5 1054.0,642.0 1051.1,654.4 1044.5,642.7 1039.7,654.5 1035.0,642.0 1028.5,652.9 1025.8,639.7 1017.6,649.5 1017.0,636.1 1007.4,644.5 1008.9,631.1 998.1,637.9 1001.7,625.0 990.0,630.0 995.6,617.8 983.2,620.9 990.6,609.7 977.9,610.8 987.0,600.9 974.2,600.0 984.7,591.7 972.3,588.8 984.0,582.2 972.2,577.4 984.7,572.7 973.8,566.2 987.0,563.5 977.2,555.3 990.6,554.7 982.2,545.1 995.6,546.6 988.8,535.8 1001.7,539.4 996.7,527.7 1008.9,533.3 1005.8,520.9 1017.0,528.3 1015.9,515.6 1025.8,524.7 1026.7,511.9 1035.0,522.4 1037.9,510.0 1044.5,521.7 1049.3,509.9 1054.0,522.4 1060.5,511.5 1063.2,524.7 1071.4,514.9 1072.0,528.3 1081.6,519.9 1080.1,533.3 1090.9,526.5 1087.3,539.4 1099.0,534.4 1093.4,546.6 1105.8,543.5 1098.4,554.7 1111.1,553.6 1102.0,563.5 1114.8,564.4 1104.3,572.7 1116.7,575.6" fill="#888888"/>
<circle cx="1044.5" cy="582.2" r="58" fill="#ffffff"/>
<g transform="translate(1044.5,582.2) rotate(-13.5)"><rect x="-59" y="-12" width="118" height="24" fill="#c0c0c0"/><path d="M-59,-4.2H59M-59,4.2H59" stroke="#111" stroke-width="1"/><text x="0" y="3" font-size="7" fill="#555" text-anchor="middle">Turntable</text></g>
<path d="M1118.0,300.3 L1114.0,300.3 L1110.0,300.3 L1106.0,300.3 L1102.0,300.3 L1098.0,300.3 L1093.9,300.3 L1089.9,300.3 L1085.9,300.3 L1081.9,300.3 L1077.9,300.3 L1073.9,300.3 L1069.9,300.3 L1065.9,300.3 L1061.9,300.3 L1057.9,300.3 L1053.8,300.3 L1049.8,300.3 L1045.8,300.3 L1041.8,300.3 L1037.8,300.3 L1033.8,300.3 L1029.8,300.3 L1025.8,300.3 L1021.8,300.3 L1017.8,300.3 L1013.7,300.3 L1009.7,300.3 L1005.7,300.3 L1001.7,300.3 L997.7,300.3 L993.6,300.3 L989.4,300.3 L985.3,300.3 L981.2,300.3 L977.0,300.3 L972.9,300.3 L968.8,300.3 L964.6,300.3 L960.5,300.3 L956.4,300.3 L952.2,300.3 L948.1,300.3 L944.0,300.3 L939.9,300.3 L935.7,300.3 L931.6,300.3 L927.5,300.3 L923.3,300.3 L919.2,300.3 L915.1,300.3 L910.9,300.3 L906.8,300.3 L902.7,300.3 L898.5,300.3 L894.4,300.3 L890.3,300.3 L886.1,300.3 L882.0,300.3 L877.9,300.3 L873.8,300.3 L869.7,300.3 L865.7,300.3 L861.6,300.3 L857.5,300.3 L853.4,300.3 L849.3,300.3 L845.2,300.3 L841.2,300.3 L837.1,300.3 L833.0,300.3 L828.9,300.3 L824.8,300.3 L820.7,300.3 L816.7,300.3 L812.6,300.3 L808.5,300.3 L804.4,300.3 L800.3,300.3 L796.2,300.3 L792.2,300.3 L788.1,300.3 L784.0,300.3 L779.9,300.3 L775.8,300.3 L771.7,300.3 L767.7,300.3 L763.6,300.3 L759.5,300.3 L755.4,300.3 L751.3,300.3 L747.2,300.3 L743.2,300.3 L739.1,300.3 L735.0,300.3 L730.9,300.3 L726.8,300.3 L722.7,300.3 L718.7,300.3 L714.6,300.3 L710.5,300.3 L706.4,300.3 L702.4,300.3 L698.3,300.3 L694.2,300.3 L690.2,300.3 L686.1,300.3 L682.0,300.3 L678.0,300.3 L673.9,300.3 L669.8,300.3 L665.8,300.3 L661.7,300.3 L657.6,300.3 L653.6,300.3 L649.5,300.3 L645.5,300.3 L641.4,300.3 L637.3,300.3 L633.3,300.3 L629.2,300.3 L625.1,300.3 L621.1,300.3 L617.0,300.3 L612.9,300.3 L608.9,300.3 L604.8,300.3 L600.7,300.3 L596.7,300.3 L592.6,300.3 L589.5,300.3 L586.5,300.4 L583.4,300.5 L580.3,300.6 L577.3,300.7 L574.2,300.9 L571.2,301.2 L568.1,301.4 L565.1,301.7 L562.0,302.1 L559.0,302.5 L556.0,302.9 L552.9,303.3 L549.9,303.8 L546.9,304.3 L543.9,304.8 L540.9,305.4 L537.9,306.1 L534.9,306.7 L531.9,307.4 L528.9,308.1 L525.9,308.9 L523.0,309.7 L520.0,310.5 L517.1,311.4 L514.2,312.3 L511.2,313.2 L508.3,314.2 L505.4,315.1 L502.5,316.2 L499.7,317.2 L496.8,318.3 L494.0,319.5 L491.1,320.6 L488.3,321.8 L485.5,323.1 L482.7,324.3 L479.9,325.6 L477.2,326.9 L474.4,328.3 L471.7,329.7 L469.0,331.1 L466.3,332.6 L463.6,334.1 L460.9,335.6 L458.3,337.1 L455.7,338.7 L453.1,340.3 L450.5,341.9 L447.9,343.6 L445.4,345.3 L442.8,347.0 L440.3,348.8 L437.8,350.6 L435.4,352.4 L432.9,354.2 L430.5,356.1 L428.1,358.0 L425.7,359.9 L423.4,361.9 L421.0,363.9 L418.7,365.9 L416.4,367.9 L414.2,370.0 L411.9,372.1 L409.7,374.2 L407.5,376.3 L405.3,378.5 L403.2,380.7 L401.1,382.9 L399.0,385.2 L396.9,387.4 L394.9,389.7 L392.9,392.0 L390.9,394.4 L388.9,396.7 L387.0,399.1 L385.1,401.5 L383.2,403.9 L381.4,406.4 L379.6,408.8 L377.8,411.3 L376.0,413.8 L374.3,416.4 L372.6,418.9 L370.9,421.5 L369.3,424.1 L367.7,426.7 L366.1,429.3 L364.6,431.9 L363.1,434.6 L361.6,437.3 L360.1,440.0 L358.7,442.7 L357.3,445.4 L355.9,448.2 L354.6,450.9 L353.3,453.7 L352.1,456.5 L350.8,459.3 L349.6,462.1 L348.5,465.0 L347.3,467.8 L346.2,470.7 L345.2,473.5 L344.1,476.4 L343.2,479.3 L342.2,482.2 L341.3,485.2 L340.4,488.1 L339.5,491.0 L338.7,494.0 L337.9,496.9 L337.1,499.9 L336.4,502.9 L335.7,505.9 L335.1,508.9 L334.4,511.9 L333.8,514.9 L333.3,517.9 L332.8,520.9 L332.3,523.9 L331.9,527.0 L331.5,530.0 L331.1,533.0 L330.7,536.1 L330.4,539.1 L330.2,542.2 L329.9,545.2 L329.7,548.3 L329.6,551.3 L329.5,554.4 L329.4,557.5 L329.3,560.5 L329.3,563.6 L329.3,566.7 L329.4,569.7 L329.5,572.8 L329.6,575.9 L329.7,578.9 L329.9,582.0 L330.2,585.0 L330.4,588.1 L330.7,591.1 L331.1,594.2 L331.5,597.2 L331.9,600.2 L332.3,603.3 L332.8,606.3 L333.3,609.3 L333.8,612.3 L334.4,615.3 L335.1,618.3 L335.7,621.3 L336.4,624.3 L337.1,627.3 L337.9,630.3 L338.7,633.2 L339.5,636.2 L340.4,639.1 L341.3,642.0 L342.2,645.0 L343.2,647.9 L344.1,650.8 L345.2,653.7 L346.2,656.5 L347.3,659.4 L348.5,662.2 L349.6,665.1 L350.8,667.9 L352.1,670.7 L353.3,673.5 L354.6,676.3 L355.9,679.0 L357.3,681.8 L358.7,684.5 L360.1,687.2 L361.6,689.9 L363.1,692.6 L364.6,695.2 L366.1,697.9 L367.7,700.5 L369.3,703.1 L370.9,705.7 L372.6,708.3 L374.3,710.8 L376.0,713.4 L377.8,715.9 L379.6,718.4 L381.4,720.8 L383.2,723.3 L385.1,725.7 L387.0,728.1 L388.9,730.5 L390.9,732.8 L392.9,735.2 L394.9,737.5 L396.9,739.8 L399.0,742.0 L401.1,744.3 L403.2,746.5 L405.3,748.7 L407.5,750.9 L409.7,753.0 L411.9,755.1 L414.2,757.2 L416.4,759.3 L418.7,761.3 L421.0,763.3 L423.4,765.3 L425.7,767.3 L428.1,769.2 L430.5,771.1 L432.9,773.0 L435.4,774.8 L437.8,776.6 L440.3,778.4 L442.8,780.2 L445.4,781.9 L447.9,783.6 L450.5,785.3 L453.1,786.9 L455.7,788.5 L458.3,790.1 L460.9,791.6 L463.6,793.1 L466.3,794.6 L469.0,796.1 L471.7,797.5 L474.4,798.9 L477.2,800.3 L479.9,801.6 L482.7,802.9 L485.5,804.1 L488.3,805.4 L491.1,806.6 L494.0,807.7 L496.8,808.9 L499.7,810.0 L502.5,811.0 L505.4,812.1 L508.3,813.0 L511.2,814.0 L514.2,814.9 L517.1,815.8 L520.0,816.7 L523.0,817.5 L525.9,818.3 L528.9,819.1 L531.9,819.8 L534.9,820.5 L537.9,821.1 L540.9,821.8 L543.9,822.4 L546.9,822.9 L549.9,823.4 L552.9,823.9 L556.0,824.3 L559.0,824.7 L562.0,825.1 L565.1,825.5 L568.1,825.8 L571.2,826.0 L574.2,826.3 L577.3,826.5 L580.3,826.6 L583.4,826.7 L586.5,826.8 L589.5,826.9 L592.6,826.9 L596.8,826.9 L601.0,826.9 L605.1,826.9 L609.1,826.9 L613.2,826.9 L617.2,826.9 L621.3,826.9 L625.4,826.9 L629.4,826.9 L633.5,826.9 L637.5,826.9 L641.6,826.9 L645.6,826.9 L649.7,826.9 L653.8,826.9 L657.8,826.9 L661.9,826.9 L665.9,826.9 L670.0,826.9 L674.1,826.9 L678.1,826.9 L682.2,826.9 L686.2,826.9 L690.3,826.9 L694.4,826.9 L698.4,826.9 L702.5,826.9 L706.5,826.9 L710.6,826.9 L714.7,826.9 L718.7,826.9 L722.8,826.9 L726.8,826.9 L730.9,826.9 L734.9,826.9 L739.0,826.9 L743.1,826.9 L747.1,826.9 L751.2,826.9 L755.2,826.9 L759.3,826.9 L763.4,826.9 L767.5,826.9 L771.6,826.9 L775.8,826.9 L779.9,826.9 L784.0,826.9 L788.1,826.9 L792.2,826.9 L796.3,826.9 L800.4,826.9 L804.6,826.9 L808.7,826.9 L812.8,826.9 L816.9,826.9 L821.0,826.9 L825.1,826.9 L829.2,826.9 L833.4,826.9 L837.5,826.9 L841.6,826.9 L845.7,826.9 L849.8,826.9 L853.9,826.9 L858.0,826.9 L862.2,826.9 L866.3,826.9 L870.4,826.9 L874.5,826.9 L878.5,826.9 L882.5,826.9 L886.6,826.9 L890.6,826.9 L894.6,826.9 L898.6,826.9 L902.6,826.9 L906.6,826.9 L910.7,826.9 L914.7,826.9 L918.7,826.9 L922.7,826.9 L926.7,826.9 L930.7,826.9 L934.8,826.9 L938.8,826.9 L942.8,826.9 L946.8,826.9 L950.8,826.9 L954.8,826.9 L958.9,826.9 L962.9,826.9 L966.9,826.9 L970.9,826.9 L974.9,826.9 L978.9,826.9 L983.0,826.9 L987.0,826.9 L991.0,826.9 L995.1,826.9 L999.2,826.9 L1003.3,826.9 L1007.5,826.9 L1011.6,826.9 L1015.7,826.9 L1019.8,826.9 L1023.9,826.9 L1028.0,826.9 L1032.1,826.9 L1036.3,826.9 L1040.4,826.9 L1044.5,826.9 L1048.6,826.9 L1052.7,826.9 L1056.8,826.9 L1060.9,826.9 L1065.1,826.9 L1069.2,826.9 L1073.3,826.9 L1077.4,826.9 L1081.5,826.9 L1085.6,826.9 L1089.7,826.9 L1093.9,826.9 L1098.0,826.9 L1102.1,826.9 L1106.2,826.9 L1109.3,826.9 L1112.3,826.8 L1115.4,826.7 L1118.4,826.6 L1121.5,826.5 L1124.6,826.3 L1127.6,826.0 L1130.7,825.8 L1133.7,825.5 L1136.7,825.2 L1139.8,824.8 L1142.8,824.4 L1145.8,824.0 L1148.9,823.5 L1151.9,823.0 L1154.9,822.5 L1157.9,821.9 L1160.9,821.3 L1163.9,820.6 L1166.9,820.0 L1169.9,819.3 L1172.8,818.5 L1175.8,817.7 L1178.7,816.9 L1181.7,816.1 L1184.6,815.2 L1187.5,814.3 L1190.5,813.4 L1193.4,812.4 L1196.2,811.4 L1199.1,810.3 L1202.0,809.3 L1204.8,808.2 L1207.7,807.0 L1210.5,805.8 L1213.3,804.6 L1216.1,803.4 L1218.9,802.1 L1221.7,800.8 L1224.4,799.5 L1227.2,798.1 L1229.9,796.8 L1232.6,795.3 L1235.3,793.9 L1238.0,792.4 L1240.6,790.9 L1243.3,789.3 L1245.9,787.8 L1248.5,786.1 L1251.1,784.5 L1253.7,782.8 L1256.2,781.2 L1258.8,779.4 L1261.3,777.7 L1263.8,775.9 L1266.2,774.1 L1268.7,772.3 L1271.1,770.4 L1273.5,768.5 L1275.9,766.6 L1278.3,764.6 L1280.6,762.7 L1282.9,760.7 L1285.2,758.6 L1287.5,756.6 L1289.7,754.5 L1292.0,752.4 L1294.2,750.3 L1296.3,748.1 L1298.5,746.0 L1300.6,743.8 L1302.7,741.5 L1304.8,739.3 L1306.8,737.0 L1308.9,734.7 L1310.9,732.4 L1312.8,730.1 L1314.8,727.7 L1316.7,725.3 L1318.6,722.9 L1320.5,720.5 L1322.3,718.0 L1324.1,715.6 L1325.9,713.1 L1327.6,710.6 L1329.4,708.0 L1331.0,705.5 L1332.7,702.9 L1334.3,700.3 L1336.0,697.7 L1337.5,695.1 L1339.1,692.5 L1340.6,689.8 L1342.1,687.1 L1343.5,684.4 L1345.0,681.7 L1346.3,679.0 L1347.7,676.2 L1349.0,673.5 L1350.3,670.7 L1351.6,667.9 L1352.8,665.1 L1354.0,662.3 L1355.2,659.5 L1356.4,656.6 L1357.5,653.8 L1358.5,650.9 L1359.6,648.0 L1360.6,645.2 L1361.6,642.3 L1362.5,639.3 L1363.4,636.4 L1364.3,633.5 L1365.1,630.5 L1365.9,627.6 L1366.7,624.6 L1367.5,621.7 L1368.2,618.7 L1368.8,615.7 L1369.5,612.7 L1370.1,609.7 L1370.7,606.7 L1371.2,603.7 L1371.7,600.7 L1372.2,597.6 L1372.6,594.6 L1373.0,591.6 L1373.4,588.5 L1373.7,585.5 L1374.0,582.5 L1374.2,579.4 L1374.5,576.4 L1374.7,573.3 L1374.8,570.2 L1374.9,567.2 L1375.0,564.1 L1375.1,561.1 L1375.1,558.0 L1375.1,556.0 M1118.0,308.7 L1114.0,308.7 L1110.0,308.7 L1106.0,308.7 L1102.0,308.7 L1098.0,308.7 L1093.9,308.7 L1089.9,308.7 L1085.9,308.7 L1081.9,308.7 L1077.9,308.7 L1073.9,308.7 L1069.9,308.7 L1065.9,308.7 L1061.9,308.7 L1057.9,308.7 L1053.8,308.7 L1049.8,308.7 L1045.8,308.7 L1041.8,308.7 L1037.8,308.7 L1033.8,308.7 L1029.8,308.7 L1025.8,308.7 L1021.8,308.7 L1017.8,308.7 L1013.7,308.7 L1009.7,308.7 L1005.7,308.7 L1001.7,308.7 L997.7,308.7 L993.6,308.7 L989.4,308.7 L985.3,308.7 L981.2,308.7 L977.0,308.7 L972.9,308.7 L968.8,308.7 L964.6,308.7 L960.5,308.7 L956.4,308.7 L952.2,308.7 L948.1,308.7 L944.0,308.7 L939.9,308.7 L935.7,308.7 L931.6,308.7 L927.5,308.7 L923.3,308.7 L919.2,308.7 L915.1,308.7 L910.9,308.7 L906.8,308.7 L902.7,308.7 L898.5,308.7 L894.4,308.7 L890.3,308.7 L886.1,308.7 L882.0,308.7 L877.9,308.7 L873.8,308.7 L869.7,308.7 L865.7,308.7 L861.6,308.7 L857.5,308.7 L853.4,308.7 L849.3,308.7 L845.2,308.7 L841.2,308.7 L837.1,308.7 L833.0,308.7 L828.9,308.7 L824.8,308.7 L820.7,308.7 L816.7,308.7 L812.6,308.7 L808.5,308.7 L804.4,308.7 L800.3,308.7 L796.2,308.7 L792.2,308.7 L788.1,308.7 L784.0,308.7 L779.9,308.7 L775.8,308.7 L771.7,308.7 L767.7,308.7 L763.6,308.7 L759.5,308.7 L755.4,308.7 L751.3,308.7 L747.2,308.7 L743.2,308.7 L739.1,308.7 L735.0,308.7 L730.9,308.7 L726.8,308.7 L722.7,308.7 L718.7,308.7 L714.6,308.7 L710.5,308.7 L706.4,308.7 L702.4,308.7 L698.3,308.7 L694.2,308.7 L690.2,308.7 L686.1,308.7 L682.0,308.7 L678.0,308.7 L673.9,308.7 L669.8,308.7 L665.8,308.7 L661.7,308.7 L657.6,308.7 L653.6,308.7 L649.5,308.7 L645.5,308.7 L641.4,308.7 L637.3,308.7 L633.3,308.7 L629.2,308.7 L625.1,308.7 L621.1,308.7 L617.0,308.7 L612.9,308.7 L608.9,308.7 L604.8,308.7 L600.7,308.7 L596.7,308.7 L592.6,308.7 L589.6,308.7 L586.7,308.8 L583.7,308.9 L580.7,309.0 L577.8,309.1 L574.8,309.3 L571.9,309.5 L568.9,309.8 L566.0,310.1 L563.0,310.4 L560.1,310.8 L557.1,311.2 L554.2,311.6 L551.3,312.1 L548.3,312.6 L545.4,313.1 L542.5,313.7 L539.6,314.3 L536.7,314.9 L533.8,315.6 L530.9,316.3 L528.1,317.0 L525.2,317.8 L522.3,318.6 L519.5,319.4 L516.7,320.3 L513.8,321.2 L511.0,322.1 L508.2,323.1 L505.4,324.1 L502.6,325.1 L499.9,326.2 L497.1,327.3 L494.4,328.4 L491.6,329.5 L488.9,330.7 L486.2,332.0 L483.5,333.2 L480.9,334.5 L478.2,335.8 L475.6,337.2 L472.9,338.5 L470.3,339.9 L467.7,341.4 L465.1,342.9 L462.6,344.3 L460.0,345.9 L457.5,347.4 L455.0,349.0 L452.5,350.6 L450.1,352.3 L447.6,354.0 L445.2,355.7 L442.8,357.4 L440.4,359.1 L438.0,360.9 L435.7,362.7 L433.3,364.6 L431.0,366.4 L428.8,368.3 L426.5,370.3 L424.3,372.2 L422.0,374.2 L419.8,376.2 L417.7,378.2 L415.5,380.2 L413.4,382.3 L411.3,384.4 L409.2,386.5 L407.2,388.7 L405.2,390.8 L403.2,393.0 L401.2,395.3 L399.3,397.5 L397.3,399.8 L395.4,402.0 L393.6,404.3 L391.7,406.7 L389.9,409.0 L388.1,411.4 L386.4,413.8 L384.7,416.2 L383.0,418.6 L381.3,421.1 L379.6,423.5 L378.0,426.0 L376.4,428.5 L374.9,431.0 L373.3,433.6 L371.9,436.1 L370.4,438.7 L368.9,441.3 L367.5,443.9 L366.2,446.6 L364.8,449.2 L363.5,451.9 L362.2,454.5 L361.0,457.2 L359.7,459.9 L358.5,462.6 L357.4,465.4 L356.3,468.1 L355.2,470.9 L354.1,473.6 L353.1,476.4 L352.1,479.2 L351.1,482.0 L350.2,484.8 L349.3,487.7 L348.4,490.5 L347.6,493.3 L346.8,496.2 L346.0,499.1 L345.3,501.9 L344.6,504.8 L343.9,507.7 L343.3,510.6 L342.7,513.5 L342.1,516.4 L341.6,519.3 L341.1,522.3 L340.6,525.2 L340.2,528.1 L339.8,531.1 L339.4,534.0 L339.1,537.0 L338.8,539.9 L338.5,542.9 L338.3,545.8 L338.1,548.8 L338.0,551.7 L337.9,554.7 L337.8,557.7 L337.7,560.6 L337.7,563.6 L337.7,566.6 L337.8,569.5 L337.9,572.5 L338.0,575.5 L338.1,578.4 L338.3,581.4 L338.5,584.3 L338.8,587.3 L339.1,590.2 L339.4,593.2 L339.8,596.1 L340.2,599.1 L340.6,602.0 L341.1,604.9 L341.6,607.9 L342.1,610.8 L342.7,613.7 L343.3,616.6 L343.9,619.5 L344.6,622.4 L345.3,625.3 L346.0,628.1 L346.8,631.0 L347.6,633.9 L348.4,636.7 L349.3,639.5 L350.2,642.4 L351.1,645.2 L352.1,648.0 L353.1,650.8 L354.1,653.6 L355.2,656.3 L356.3,659.1 L357.4,661.8 L358.5,664.6 L359.7,667.3 L361.0,670.0 L362.2,672.7 L363.5,675.3 L364.8,678.0 L366.2,680.6 L367.5,683.3 L368.9,685.9 L370.4,688.5 L371.9,691.0 L373.3,693.6 L374.9,696.2 L376.4,698.7 L378.0,701.2 L379.6,703.7 L381.3,706.1 L383.0,708.6 L384.7,711.0 L386.4,713.4 L388.1,715.8 L389.9,718.2 L391.7,720.5 L393.6,722.9 L395.4,725.2 L397.3,727.4 L399.3,729.7 L401.2,731.9 L403.2,734.2 L405.2,736.4 L407.2,738.5 L409.2,740.7 L411.3,742.8 L413.4,744.9 L415.5,747.0 L417.7,749.0 L419.8,751.0 L422.0,753.0 L424.3,755.0 L426.5,756.9 L428.8,758.9 L431.0,760.8 L433.3,762.6 L435.7,764.5 L438.0,766.3 L440.4,768.1 L442.8,769.8 L445.2,771.5 L447.6,773.2 L450.1,774.9 L452.5,776.6 L455.0,778.2 L457.5,779.8 L460.0,781.3 L462.6,782.9 L465.1,784.3 L467.7,785.8 L470.3,787.3 L472.9,788.7 L475.6,790.0 L478.2,791.4 L480.9,792.7 L483.5,794.0 L486.2,795.2 L488.9,796.5 L491.6,797.7 L494.4,798.8 L497.1,799.9 L499.9,801.0 L502.6,802.1 L505.4,803.1 L508.2,804.1 L511.0,805.1 L513.8,806.0 L516.7,806.9 L519.5,807.8 L522.3,808.6 L525.2,809.4 L528.1,810.2 L530.9,810.9 L533.8,811.6 L536.7,812.3 L539.6,812.9 L542.5,813.5 L545.4,814.1 L548.3,814.6 L551.3,815.1 L554.2,815.6 L557.1,816.0 L560.1,816.4 L563.0,816.8 L566.0,817.1 L568.9,817.4 L571.9,817.7 L574.8,817.9 L577.8,818.1 L580.7,818.2 L583.7,818.3 L586.7,818.4 L589.6,818.5 L592.6,818.5 L596.8,818.5 L601.0,818.5 L605.1,818.5 L609.1,818.5 L613.2,818.5 L617.2,818.5 L621.3,818.5 L625.4,818.5 L629.4,818.5 L633.5,818.5 L637.5,818.5 L641.6,818.5 L645.6,818.5 L649.7,818.5 L653.8,818.5 L657.8,818.5 L661.9,818.5 L665.9,818.5 L670.0,818.5 L674.1,818.5 L678.1,818.5 L682.2,818.5 L686.2,818.5 L690.3,818.5 L694.4,818.5 L698.4,818.5 L702.5,818.5 L706.5,818.5 L710.6,818.5 L714.7,818.5 L718.7,818.5 L722.8,818.5 L726.8,818.5 L730.9,818.5 L734.9,818.5 L739.0,818.5 L743.1,818.5 L747.1,818.5 L751.2,818.5 L755.2,818.5 L759.3,818.5 L763.4,818.5 L767.5,818.5 L771.6,818.5 L775.8,818.5 L779.9,818.5 L784.0,818.5 L788.1,818.5 L792.2,818.5 L796.3,818.5 L800.4,818.5 L804.6,818.5 L808.7,818.5 L812.8,818.5 L816.9,818.5 L821.0,818.5 L825.1,818.5 L829.2,818.5 L833.4,818.5 L837.5,818.5 L841.6,818.5 L845.7,818.5 L849.8,818.5 L853.9,818.5 L858.0,818.5 L862.2,818.5 L866.3,818.5 L870.4,818.5 L874.5,818.5 L878.5,818.5 L882.5,818.5 L886.6,818.5 L890.6,818.5 L894.6,818.5 L898.6,818.5 L902.6,818.5 L906.6,818.5 L910.7,818.5 L914.7,818.5 L918.7,818.5 L922.7,818.5 L926.7,818.5 L930.7,818.5 L934.8,818.5 L938.8,818.5 L942.8,818.5 L946.8,818.5 L950.8,818.5 L954.8,818.5 L958.9,818.5 L962.9,818.5 L966.9,818.5 L970.9,818.5 L974.9,818.5 L978.9,818.5 L983.0,818.5 L987.0,818.5 L991.0,818.5 L995.1,818.5 L999.2,818.5 L1003.3,818.5 L1007.5,818.5 L1011.6,818.5 L1015.7,818.5 L1019.8,818.5 L1023.9,818.5 L1028.0,818.5 L1032.1,818.5 L1036.3,818.5 L1040.4,818.5 L1044.5,818.5 L1048.6,818.5 L1052.7,818.5 L1056.8,818.5 L1060.9,818.5 L1065.1,818.5 L1069.2,818.5 L1073.3,818.5 L1077.4,818.5 L1081.5,818.5 L1085.6,818.5 L1089.7,818.5 L1093.9,818.5 L1098.0,818.5 L1102.1,818.5 L1106.2,818.5 L1109.2,818.5 L1112.1,818.4 L1115.1,818.3 L1118.1,818.2 L1121.0,818.1 L1124.0,817.9 L1126.9,817.7 L1129.9,817.4 L1132.8,817.1 L1135.8,816.8 L1138.7,816.5 L1141.7,816.1 L1144.6,815.7 L1147.5,815.2 L1150.5,814.7 L1153.4,814.2 L1156.3,813.6 L1159.2,813.1 L1162.1,812.4 L1165.0,811.8 L1167.9,811.1 L1170.8,810.4 L1173.6,809.6 L1176.5,808.8 L1179.3,808.0 L1182.2,807.2 L1185.0,806.3 L1187.8,805.4 L1190.6,804.4 L1193.4,803.5 L1196.2,802.5 L1199.0,801.4 L1201.8,800.3 L1204.5,799.2 L1207.3,798.1 L1210.0,796.9 L1212.7,795.7 L1215.4,794.5 L1218.1,793.3 L1220.8,792.0 L1223.4,790.6 L1226.0,789.3 L1228.7,787.9 L1231.3,786.5 L1233.9,785.1 L1236.4,783.6 L1239.0,782.1 L1241.6,780.6 L1244.1,779.0 L1246.6,777.4 L1249.1,775.8 L1251.5,774.2 L1254.0,772.5 L1256.4,770.8 L1258.8,769.1 L1261.2,767.3 L1263.6,765.6 L1266.0,763.8 L1268.3,761.9 L1270.6,760.1 L1272.9,758.2 L1275.2,756.3 L1277.4,754.3 L1279.6,752.4 L1281.8,750.4 L1284.0,748.4 L1286.2,746.3 L1288.3,744.3 L1290.4,742.2 L1292.5,740.1 L1294.5,738.0 L1296.6,735.8 L1298.6,733.6 L1300.6,731.4 L1302.5,729.2 L1304.5,727.0 L1306.4,724.7 L1308.3,722.4 L1310.1,720.1 L1312.0,717.8 L1313.8,715.4 L1315.5,713.0 L1317.3,710.6 L1319.0,708.2 L1320.7,705.8 L1322.4,703.3 L1324.0,700.9 L1325.6,698.4 L1327.2,695.9 L1328.8,693.4 L1330.3,690.8 L1331.8,688.3 L1333.3,685.7 L1334.7,683.1 L1336.1,680.5 L1337.5,677.8 L1338.8,675.2 L1340.2,672.6 L1341.5,669.9 L1342.7,667.2 L1343.9,664.5 L1345.1,661.8 L1346.3,659.1 L1347.4,656.3 L1348.5,653.6 L1349.6,650.8 L1350.7,648.0 L1351.7,645.2 L1352.6,642.4 L1353.6,639.6 L1354.5,636.8 L1355.4,634.0 L1356.2,631.1 L1357.0,628.3 L1357.8,625.4 L1358.6,622.6 L1359.3,619.7 L1360.0,616.8 L1360.6,613.9 L1361.3,611.0 L1361.8,608.1 L1362.4,605.2 L1362.9,602.3 L1363.4,599.3 L1363.9,596.4 L1364.3,593.5 L1364.7,590.5 L1365.0,587.6 L1365.3,584.6 L1365.6,581.7 L1365.9,578.7 L1366.1,575.8 L1366.3,572.8 L1366.4,569.9 L1366.5,566.9 L1366.6,563.9 L1366.7,561.0 L1366.7,558.0 L1366.7,556.0 M329.3,538.2 L329.3,542.7 L329.5,547.3 L329.7,551.8 L330.0,556.4 L330.4,560.9 L330.9,565.4 L331.5,570.0 L332.2,574.5 L332.9,579.0 L333.8,583.4 L334.7,587.9 L335.7,592.4 L336.8,596.8 L338.0,601.2 L339.3,605.6 L340.6,609.9 L342.1,614.2 L343.6,618.5 L345.3,622.8 L347.0,627.0 L348.7,631.2 L350.6,635.4 L352.6,639.5 L354.6,643.6 L356.7,647.6 L358.9,651.6 L361.2,655.6 L363.5,659.5 L365.9,663.4 L368.4,667.2 L371.0,670.9 L373.6,674.7 L376.3,678.3 L379.1,681.9 L382.0,685.5 L384.9,689.0 L387.9,692.4 L391.0,695.8 L394.1,699.1 L397.3,702.4 L400.5,705.6 L403.9,708.7 L407.2,711.8 L410.7,714.7 L414.2,717.7 L417.7,720.5 L421.3,723.3 L425.0,726.0 L428.7,728.7 L432.5,731.3 L436.3,733.8 L440.2,736.2 L444.1,738.5 L448.0,740.8 L452.0,743.0 L456.1,745.1 L460.1,747.1 L464.3,749.1 L468.4,750.9 L472.6,752.7 L476.9,754.4 L481.1,756.0 L485.4,757.6 L489.7,759.0 L494.1,760.4 L498.5,761.7 L502.9,762.9 L507.3,764.0 L511.7,765.0 L516.2,765.9 L520.7,766.8 L525.2,767.5 L529.7,768.2 L534.2,768.8 L538.7,769.3 L543.3,769.7 L547.8,770.0 L552.4,770.2 L556.9,770.4 L561.3,770.4 L603.8,773.1 L608.0,773.1 L612.0,773.2 L616.1,773.3 L620.1,773.3 L624.1,773.4 L628.2,773.4 L632.2,773.5 L636.2,773.6 L640.3,773.6 L644.3,773.7 L648.3,773.8 L652.4,773.8 L656.4,773.9 L660.4,773.9 L664.5,774.0 L668.5,774.1 L672.5,774.1 L676.6,774.2 L680.6,774.3 L684.6,774.3 L688.7,774.4 L692.7,774.4 L696.8,774.5 L700.8,774.6 L704.8,774.6 L708.9,774.7 L712.9,774.8 L716.9,774.8 L721.0,774.9 L725.0,774.9 L729.0,775.0 L733.1,775.1 L737.1,775.1 L741.2,775.2 L745.2,775.3 L749.2,775.3 L753.3,775.4 L757.3,775.4 L761.4,775.5 L765.4,775.6 L769.4,775.6 L773.5,775.7 L777.5,775.8 L781.6,775.8 L785.6,775.9 L789.7,775.9 L793.7,776.0 L797.7,776.1 L801.8,776.1 L805.8,776.2 L809.9,776.3 L813.9,776.3 L817.9,776.4 L822.0,776.4 L826.0,776.5 L830.1,776.6 L834.1,776.6 L838.1,776.7 L842.2,776.8 L846.2,776.8 L850.3,776.9 L854.3,776.9 L858.3,777.0 L862.4,777.1 L866.4,777.1 L870.5,777.2 L874.5,777.3 L878.5,777.3 L882.6,777.4 L886.6,777.5 L890.7,777.5 L894.7,777.6 L898.7,777.6 L902.8,777.7 L906.8,777.8 L910.9,777.8 L914.9,777.9 L919.0,778.0 L923.0,778.0 L927.0,778.1 L931.1,778.1 L935.1,778.2 L939.2,778.3 L943.2,778.3 L947.2,778.4 L951.3,778.5 L955.3,778.5 L959.4,778.6 L963.4,778.6 L967.4,778.7 L971.5,778.8 L975.5,778.8 L979.6,778.9 L983.6,779.0 L987.6,779.0 L991.7,779.1 L995.7,779.1 L999.8,779.2 L1003.8,779.3 L1007.8,779.3 L1011.9,779.4 L1015.9,779.5 L1019.9,779.5 L1023.9,779.6 L1028.0,779.6 L1032.0,779.7 L1036.0,779.8 L1040.0,779.8 L1044.0,779.9 L1048.0,780.0 L1052.1,780.0 L1056.1,780.1 L1060.1,780.1 L1064.1,780.2 L1068.1,780.3 L1072.1,780.3 L1076.2,780.4 L1080.2,780.5 L1084.2,780.5 L1088.2,780.6 L1092.2,780.6 L1096.2,780.7 L1100.3,780.8 L1104.3,780.8 L1108.3,780.9 L1112.3,781.0 L1116.3,781.0 L1120.3,781.1 L1124.4,781.1 L1128.4,781.2 L1131.5,781.2 L1134.6,781.2 L1137.7,781.2 L1140.8,781.1 L1144.0,781.0 L1147.1,780.8 L1150.2,780.6 L1153.3,780.3 L1156.4,780.1 L1159.5,779.7 L1162.6,779.4 L1165.7,779.0 L1168.8,778.6 L1171.9,778.1 L1174.9,777.6 L1178.0,777.0 L1181.1,776.4 L1184.1,775.8 L1187.2,775.1 L1190.2,774.4 L1193.3,773.7 L1196.3,772.9 L1199.3,772.1 L1202.3,771.2 L1205.3,770.3 L1208.2,769.4 L1211.2,768.5 L1214.2,767.4 L1217.1,766.4 L1220.0,765.3 L1223.0,764.2 L1225.9,763.1 L1228.7,761.9 L1231.6,760.7 L1234.5,759.4 L1237.3,758.1 L1240.1,756.8 L1242.9,755.4 L1245.7,754.0 L1248.5,752.6 L1251.2,751.1 L1254.0,749.6 L1256.6,748.1 L1259.3,746.6 L1261.9,745.0 L1264.5,743.4 L1267.1,741.8 L1269.7,740.1 L1272.2,738.4 L1274.7,736.7 L1277.2,735.0 L1279.7,733.2 L1282.2,731.4 L1284.6,729.5 L1287.0,727.6 L1289.4,725.7 L1291.8,723.8 L1294.1,721.8 L1296.4,719.8 L1298.7,717.8 L1301.0,715.8 L1303.2,713.7 L1305.5,711.6 L1307.7,709.5 L1309.8,707.3 L1312.0,705.1 L1314.1,702.9 L1316.2,700.7 L1318.2,698.4 L1320.3,696.1 L1322.3,693.8 L1324.2,691.5 L1326.2,689.1 L1328.1,686.8 L1330.0,684.4 L1331.8,681.9 L1333.7,679.5 L1335.5,677.0 L1337.2,674.5 L1339.0,672.0 L1340.7,669.5 L1342.4,666.9 L1344.0,664.3 L1345.7,661.6 L1347.3,659.0 L1348.8,656.3 L1350.4,653.6 L1351.9,650.9 L1353.3,648.2 L1354.8,645.4 L1356.2,642.7 L1357.5,639.9 L1358.9,637.1 L1360.2,634.2 L1361.4,631.4 L1362.7,628.6 L1363.9,625.7 L1365.0,622.8 L1366.1,619.9 L1367.2,617.0 L1368.3,614.1 L1369.3,611.2 L1370.3,608.2 L1371.2,605.3 L1372.1,602.3 L1373.0,599.3 L1373.8,596.3 L1374.6,593.3 L1375.3,590.3 L1376.0,587.3 L1376.7,584.3 L1377.4,581.2 L1378.0,578.2 L1378.5,575.1 L1379.1,572.1 L1379.6,569.0 L1380.0,565.9 L1380.4,562.9 L1380.8,559.8 L1381.1,556.7 M337.7,538.1 L337.7,542.5 L337.9,546.9 L338.1,551.3 L338.4,555.7 L338.8,560.1 L339.2,564.5 L339.8,568.8 L340.4,573.2 L341.2,577.5 L342.0,581.8 L342.9,586.1 L343.9,590.4 L344.9,594.7 L346.1,598.9 L347.3,603.1 L348.6,607.3 L350.0,611.5 L351.5,615.6 L353.1,619.7 L354.7,623.8 L356.4,627.8 L358.2,631.9 L360.1,635.8 L362.1,639.8 L364.1,643.7 L366.2,647.5 L368.4,651.3 L370.7,655.1 L373.0,658.8 L375.4,662.5 L377.9,666.1 L380.4,669.7 L383.0,673.2 L385.7,676.7 L388.5,680.2 L391.3,683.5 L394.2,686.8 L397.1,690.1 L400.2,693.3 L403.2,696.4 L406.4,699.5 L409.6,702.5 L412.8,705.5 L416.1,708.4 L419.5,711.2 L422.9,713.9 L426.4,716.6 L429.9,719.2 L433.5,721.8 L437.1,724.3 L440.8,726.7 L444.5,729.0 L448.3,731.3 L452.1,733.5 L456.0,735.6 L459.9,737.6 L463.8,739.6 L467.8,741.4 L471.8,743.2 L475.8,745.0 L479.9,746.6 L484.0,748.2 L488.2,749.6 L492.3,751.0 L496.5,752.4 L500.7,753.6 L505.0,754.7 L509.2,755.8 L513.5,756.8 L517.8,757.7 L522.2,758.5 L526.5,759.2 L530.8,759.9 L535.2,760.4 L539.6,760.9 L543.9,761.3 L548.3,761.6 L552.7,761.8 L557.1,762.0 L561.7,762.0 L604.3,764.7 L608.1,764.7 L612.2,764.8 L616.2,764.9 L620.2,764.9 L624.3,765.0 L628.3,765.0 L632.3,765.1 L636.4,765.2 L640.4,765.2 L644.4,765.3 L648.5,765.4 L652.5,765.4 L656.5,765.5 L660.6,765.5 L664.6,765.6 L668.6,765.7 L672.7,765.7 L676.7,765.8 L680.7,765.9 L684.8,765.9 L688.8,766.0 L692.8,766.0 L696.9,766.1 L700.9,766.2 L704.9,766.2 L709.0,766.3 L713.0,766.4 L717.1,766.4 L721.1,766.5 L725.1,766.5 L729.2,766.6 L733.2,766.7 L737.3,766.7 L741.3,766.8 L745.3,766.9 L749.4,766.9 L753.4,767.0 L757.5,767.0 L761.5,767.1 L765.5,767.2 L769.6,767.2 L773.6,767.3 L777.7,767.4 L781.7,767.4 L785.7,767.5 L789.8,767.5 L793.8,767.6 L797.9,767.7 L801.9,767.7 L805.9,767.8 L810.0,767.9 L814.0,767.9 L818.1,768.0 L822.1,768.0 L826.1,768.1 L830.2,768.2 L834.2,768.2 L838.3,768.3 L842.3,768.4 L846.4,768.4 L850.4,768.5 L854.4,768.6 L858.5,768.6 L862.5,768.7 L866.6,768.7 L870.6,768.8 L874.6,768.9 L878.7,768.9 L882.7,769.0 L886.8,769.1 L890.8,769.1 L894.8,769.2 L898.9,769.2 L902.9,769.3 L907.0,769.4 L911.0,769.4 L915.0,769.5 L919.1,769.6 L923.1,769.6 L927.2,769.7 L931.2,769.7 L935.2,769.8 L939.3,769.9 L943.3,769.9 L947.4,770.0 L951.4,770.1 L955.4,770.1 L959.5,770.2 L963.5,770.2 L967.6,770.3 L971.6,770.4 L975.7,770.4 L979.7,770.5 L983.7,770.6 L987.8,770.6 L991.8,770.7 L995.9,770.7 L999.9,770.8 L1003.9,770.9 L1008.0,770.9 L1012.0,771.0 L1016.0,771.1 L1020.0,771.1 L1024.1,771.2 L1028.1,771.2 L1032.1,771.3 L1036.1,771.4 L1040.1,771.4 L1044.1,771.5 L1048.2,771.6 L1052.2,771.6 L1056.2,771.7 L1060.2,771.7 L1064.2,771.8 L1068.3,771.9 L1072.3,771.9 L1076.3,772.0 L1080.3,772.1 L1084.3,772.1 L1088.3,772.2 L1092.4,772.2 L1096.4,772.3 L1100.4,772.4 L1104.4,772.4 L1108.4,772.5 L1112.4,772.6 L1116.5,772.6 L1120.5,772.7 L1124.5,772.7 L1128.5,772.8 L1131.5,772.8 L1134.5,772.8 L1137.5,772.8 L1140.6,772.7 L1143.6,772.6 L1146.6,772.4 L1149.6,772.2 L1152.6,772.0 L1155.6,771.7 L1158.6,771.4 L1161.6,771.1 L1164.6,770.7 L1167.6,770.2 L1170.5,769.8 L1173.5,769.3 L1176.5,768.8 L1179.4,768.2 L1182.4,767.6 L1185.3,766.9 L1188.3,766.3 L1191.2,765.5 L1194.1,764.8 L1197.0,764.0 L1199.9,763.2 L1202.8,762.3 L1205.7,761.4 L1208.6,760.5 L1211.4,759.5 L1214.3,758.5 L1217.1,757.5 L1219.9,756.4 L1222.7,755.3 L1225.5,754.1 L1228.3,753.0 L1231.0,751.7 L1233.8,750.5 L1236.5,749.2 L1239.2,747.9 L1241.9,746.5 L1244.6,745.2 L1247.2,743.7 L1249.9,742.3 L1252.5,740.8 L1255.0,739.4 L1257.6,737.8 L1260.1,736.3 L1262.6,734.7 L1265.0,733.1 L1267.5,731.5 L1269.9,729.8 L1272.4,728.1 L1274.8,726.4 L1277.1,724.6 L1279.5,722.8 L1281.8,721.0 L1284.1,719.2 L1286.4,717.3 L1288.7,715.4 L1290.9,713.5 L1293.1,711.5 L1295.3,709.6 L1297.5,707.6 L1299.6,705.5 L1301.8,703.5 L1303.9,701.4 L1305.9,699.3 L1308.0,697.1 L1310.0,695.0 L1312.0,692.8 L1313.9,690.6 L1315.9,688.4 L1317.8,686.1 L1319.7,683.8 L1321.5,681.5 L1323.3,679.2 L1325.1,676.9 L1326.9,674.5 L1328.6,672.1 L1330.4,669.7 L1332.0,667.3 L1333.7,664.8 L1335.3,662.3 L1336.9,659.8 L1338.5,657.3 L1340.0,654.7 L1341.6,652.1 L1343.0,649.5 L1344.5,646.9 L1345.9,644.2 L1347.3,641.6 L1348.7,638.9 L1350.0,636.2 L1351.3,633.5 L1352.5,630.8 L1353.7,628.0 L1354.9,625.3 L1356.1,622.5 L1357.2,619.7 L1358.3,616.9 L1359.3,614.1 L1360.3,611.3 L1361.3,608.5 L1362.3,605.6 L1363.2,602.8 L1364.0,599.9 L1364.9,597.0 L1365.7,594.1 L1366.4,591.2 L1367.2,588.3 L1367.9,585.4 L1368.5,582.5 L1369.1,579.5 L1369.7,576.6 L1370.3,573.7 L1370.8,570.7 L1371.3,567.7 L1371.7,564.8 L1372.1,561.8 L1372.5,558.8 L1372.8,555.8 M394.9,453.6 L397.9,454.3 L400.9,455.1 L403.9,455.9 L406.9,456.7 L410.0,457.4 L413.0,458.2 L416.1,459.0 L419.2,459.8 L422.4,460.6 L425.5,461.4 L428.7,462.2 L431.9,463.0 L435.1,463.8 L438.3,464.6 L441.5,465.4 L444.7,466.2 L448.0,467.0 L451.2,467.8 L454.5,468.6 L457.7,469.5 L461.0,470.3 L464.3,471.1 L467.6,471.9 L470.8,472.7 L474.1,473.5 L477.4,474.3 L480.7,475.2 L484.0,476.0 L487.2,476.8 L490.5,477.6 L493.8,478.4 L497.0,479.2 L500.3,480.0 L503.5,480.9 L506.8,481.7 L510.0,482.5 L513.2,483.3 L516.4,484.1 L519.6,484.9 L522.8,485.7 L525.9,486.5 L529.1,487.3 L532.2,488.1 L535.3,488.9 L538.4,489.6 L541.4,490.4 L544.5,491.2 L547.5,492.0 L550.5,492.7 L553.4,493.5 L556.4,494.3 L559.3,495.0 L562.1,495.8 L565.0,496.5 L567.8,497.3 L570.6,498.0 L573.3,498.8 L576.1,499.5 L578.7,500.2 L581.4,500.9 L584.0,501.6 L586.6,502.3 L589.1,503.0 L591.6,503.7 L594.0,504.4 L596.4,505.1 L598.7,505.8 L601.1,506.4 L603.3,507.1 L605.5,507.8 L607.7,508.4 L609.8,509.0 L611.9,509.7 L613.9,510.3 L615.8,510.9 L617.7,511.5 L621.5,512.7 L625.0,513.9 L628.4,515.0 L631.5,516.1 L634.6,517.1 L637.5,518.1 L640.2,519.2 L642.9,520.1 L645.5,521.1 L648.0,522.1 L650.5,523.1 L653.0,524.1 L655.4,525.2 L657.9,526.2 L660.4,527.3 L662.9,528.4 L665.6,529.6 L668.3,530.8 L671.0,532.1 L673.5,533.3 L676.0,534.5 L678.4,535.6 L680.8,536.8 L683.1,538.0 L685.4,539.2 L687.8,540.5 L690.2,541.8 L692.6,543.1 L695.1,544.5 L697.8,545.9 L700.5,547.5 L703.4,549.1 L706.5,550.8 L709.8,552.7 L713.2,554.6 L717.0,556.7 L718.5,557.5 L720.1,558.4 L721.7,559.3 L723.4,560.3 L725.2,561.3 L727.0,562.3 L728.8,563.4 L730.7,564.5 L732.6,565.6 L734.6,566.7 L736.6,567.9 L738.7,569.1 L740.8,570.3 L743.0,571.6 L745.2,572.9 L747.4,574.2 L749.7,575.5 L752.0,576.9 L754.4,578.3 L756.8,579.7 L759.2,581.1 L761.7,582.6 L764.2,584.0 L766.7,585.5 L769.3,587.1 L771.9,588.6 L774.5,590.2 L777.1,591.7 L779.8,593.3 L782.5,594.9 L785.3,596.6 L788.0,598.2 L790.8,599.9 L793.6,601.5 L796.4,603.2 L799.3,604.9 L802.2,606.6 L805.1,608.3 L808.0,610.1 L810.9,611.8 L813.8,613.6 L816.8,615.4 L819.8,617.1 L822.8,618.9 L825.8,620.7 L828.8,622.5 L831.8,624.3 L834.8,626.1 L837.9,627.9 L840.9,629.8 L844.0,631.6 L847.1,633.4 L850.1,635.2 L853.2,637.1 L856.3,638.9 L859.4,640.8 L862.5,642.6 L865.6,644.4 L868.7,646.3 L871.8,648.1 L874.8,649.9 L877.9,651.8 L881.0,653.6 L884.1,655.4 L887.1,657.2 L890.2,659.0 L893.3,660.8 L896.3,662.6 L899.3,664.4 L902.4,666.2 L905.4,668.0 L908.4,669.7 L911.4,671.5 L914.4,673.2 L917.3,675.0 L920.3,676.7 L923.2,678.4 L926.1,680.1 L929.0,681.8 L931.9,683.5 L934.8,685.1 L937.6,686.8 L940.4,688.4 L943.2,690.0 L945.9,691.6 L948.7,693.1 L951.4,694.7 L954.1,696.2 L956.7,697.8 L959.4,699.2 L962.0,700.7 L964.5,702.2 L967.1,703.6 L969.6,705.0 L972.1,706.4 L974.5,707.8 L976.9,709.1 L979.3,710.4 L981.6,711.7 L983.9,712.9 L986.1,714.2 L988.4,715.4 L990.5,716.6 L992.7,717.7 L994.7,718.8 L996.8,719.9 L998.8,721.0 L1000.8,722.0 L1002.7,723.0 L1004.5,723.9 L1006.3,724.9 L1008.1,725.8 L1011.7,727.6 L1015.2,729.3 L1018.6,731.0 L1021.8,732.6 L1024.9,734.1 L1027.9,735.5 L1030.9,736.9 L1033.7,738.3 L1036.5,739.6 L1039.2,740.8 L1041.9,742.0 L1044.5,743.2 L1047.1,744.3 L1049.6,745.4 L1052.2,746.4 L1054.7,747.4 L1057.3,748.4 L1059.8,749.4 L1062.4,750.4 L1065.0,751.3 L1067.6,752.3 L1070.3,753.2 L1073.0,754.1 L1075.8,755.1 L1078.7,756.0 L1081.7,756.9 L1084.6,757.9 L1087.6,758.8 L1090.6,759.7 L1093.7,760.6 L1096.8,761.5 L1099.8,762.4 L1102.9,763.3 L1106.0,764.1 L1109.1,764.9 L1112.3,765.7 L1115.4,766.5 L1118.5,767.2 L1121.6,767.9 L1124.7,768.5 L1127.8,769.2 L1130.9,769.8 L1134.0,770.3 L1137.0,770.8 L1140.0,771.2 L1143.1,771.6 L1146.0,772.0 L1149.0,772.3 L1151.9,772.5 L1154.8,772.7 L1158.1,772.8 L1161.4,772.9 L1164.7,772.9 L1168.0,772.8 L1171.2,772.7 L1174.4,772.5 L1177.5,772.2 L1180.6,771.9 L1183.7,771.5 L1186.8,771.1 L1189.9,770.6 L1193.0,770.1 L1196.0,769.6 L1199.0,768.9 L1202.1,768.3 L1205.1,767.6 L1208.1,766.8 L1211.1,766.1 L1214.2,765.2 L1217.2,764.2 L1220.3,763.2 L1223.3,762.1 L1226.3,760.9 L1229.2,759.7 L1232.2,758.4 L1235.1,757.1 L1238.0,755.8 L1240.9,754.4 L1243.7,753.1 L1246.6,751.7 L1249.5,750.3 L1252.3,749.0 L1255.1,747.7 L1258.0,746.4 L1260.8,745.1 L1263.7,743.9 M397.1,445.4 L400.0,446.2 L403.0,447.0 L406.0,447.7 L409.0,448.5 L412.0,449.3 L415.1,450.1 L418.2,450.9 L421.3,451.7 L424.4,452.4 L427.6,453.2 L430.7,454.0 L433.9,454.8 L437.1,455.6 L440.3,456.4 L443.5,457.3 L446.7,458.1 L450.0,458.9 L453.2,459.7 L456.5,460.5 L459.8,461.3 L463.0,462.1 L466.3,462.9 L469.6,463.7 L472.9,464.6 L476.1,465.4 L479.4,466.2 L482.7,467.0 L486.0,467.8 L489.3,468.6 L492.5,469.5 L495.8,470.3 L499.1,471.1 L502.3,471.9 L505.6,472.7 L508.8,473.5 L512.0,474.3 L515.3,475.1 L518.5,475.9 L521.7,476.7 L524.8,477.5 L528.0,478.3 L531.1,479.1 L534.3,479.9 L537.4,480.7 L540.4,481.5 L543.5,482.3 L546.6,483.1 L549.6,483.8 L552.6,484.6 L555.5,485.4 L558.5,486.1 L561.4,486.9 L564.3,487.7 L567.1,488.4 L570.0,489.2 L572.8,489.9 L575.5,490.6 L578.2,491.4 L580.9,492.1 L583.6,492.8 L586.2,493.5 L588.8,494.2 L591.3,495.0 L593.8,495.6 L596.3,496.3 L598.7,497.0 L601.1,497.7 L603.4,498.4 L605.7,499.0 L607.9,499.7 L610.1,500.4 L612.2,501.0 L614.3,501.6 L616.4,502.3 L618.3,502.9 L620.3,503.5 L624.1,504.7 L627.7,505.9 L631.0,507.0 L634.3,508.1 L637.4,509.2 L640.3,510.2 L643.1,511.3 L645.9,512.3 L648.5,513.3 L651.1,514.3 L653.7,515.3 L656.2,516.4 L658.7,517.4 L661.2,518.5 L663.8,519.6 L666.4,520.8 L669.0,521.9 L671.7,523.2 L674.5,524.4 L677.1,525.7 L679.7,526.9 L682.2,528.1 L684.6,529.3 L687.0,530.6 L689.3,531.8 L691.7,533.1 L694.2,534.4 L696.6,535.7 L699.2,537.1 L701.8,538.6 L704.6,540.2 L707.5,541.8 L710.6,543.5 L713.9,545.3 L717.3,547.3 L721.0,549.3 L722.6,550.2 L724.2,551.1 L725.9,552.0 L727.6,553.0 L729.3,554.0 L731.1,555.0 L733.0,556.1 L734.9,557.2 L736.8,558.3 L738.8,559.4 L740.9,560.6 L742.9,561.8 L745.1,563.1 L747.2,564.3 L749.4,565.6 L751.7,566.9 L754.0,568.3 L756.3,569.6 L758.7,571.0 L761.1,572.4 L763.5,573.9 L766.0,575.3 L768.5,576.8 L771.0,578.3 L773.6,579.8 L776.2,581.4 L778.8,582.9 L781.4,584.5 L784.1,586.1 L786.8,587.7 L789.6,589.3 L792.3,591.0 L795.1,592.6 L797.9,594.3 L800.7,596.0 L803.6,597.7 L806.5,599.4 L809.4,601.1 L812.3,602.9 L815.2,604.6 L818.1,606.4 L821.1,608.1 L824.1,609.9 L827.1,611.7 L830.1,613.5 L833.1,615.3 L836.1,617.1 L839.1,618.9 L842.2,620.7 L845.2,622.5 L848.3,624.4 L851.4,626.2 L854.4,628.0 L857.5,629.9 L860.6,631.7 L863.7,633.5 L866.8,635.4 L869.9,637.2 L873.0,639.0 L876.0,640.9 L879.1,642.7 L882.2,644.5 L885.3,646.3 L888.4,648.2 L891.4,650.0 L894.5,651.8 L897.5,653.6 L900.6,655.4 L903.6,657.2 L906.6,659.0 L909.7,660.7 L912.7,662.5 L915.6,664.2 L918.6,666.0 L921.6,667.7 L924.5,669.4 L927.4,671.2 L930.4,672.8 L933.2,674.5 L936.1,676.2 L939.0,677.8 L941.8,679.5 L944.6,681.1 L947.4,682.7 L950.1,684.3 L952.9,685.9 L955.6,687.4 L958.3,688.9 L960.9,690.5 L963.5,691.9 L966.1,693.4 L968.7,694.9 L971.2,696.3 L973.7,697.7 L976.2,699.1 L978.6,700.4 L981.0,701.7 L983.3,703.0 L985.6,704.3 L987.9,705.6 L990.2,706.8 L992.4,708.0 L994.5,709.2 L996.6,710.3 L998.7,711.4 L1000.7,712.5 L1002.7,713.5 L1004.6,714.5 L1006.5,715.5 L1008.4,716.5 L1010.1,717.4 L1011.9,718.2 L1015.5,720.1 L1018.9,721.8 L1022.3,723.4 L1025.5,725.0 L1028.6,726.5 L1031.6,728.0 L1034.5,729.3 L1037.3,730.7 L1040.0,731.9 L1042.7,733.2 L1045.3,734.3 L1047.9,735.5 L1050.4,736.6 L1052.9,737.6 L1055.4,738.6 L1057.8,739.6 L1060.3,740.6 L1062.8,741.6 L1065.3,742.5 L1067.8,743.4 L1070.4,744.4 L1073.0,745.3 L1075.7,746.2 L1078.5,747.1 L1081.3,748.0 L1084.2,748.9 L1087.1,749.8 L1090.1,750.8 L1093.1,751.7 L1096.1,752.6 L1099.1,753.4 L1102.1,754.3 L1105.1,755.1 L1108.2,756.0 L1111.2,756.8 L1114.3,757.5 L1117.3,758.3 L1120.4,759.0 L1123.4,759.7 L1126.4,760.3 L1129.4,760.9 L1132.4,761.5 L1135.4,762.0 L1138.3,762.5 L1141.2,762.9 L1144.1,763.3 L1146.9,763.6 L1149.7,763.9 L1152.5,764.1 L1155.2,764.3 L1158.4,764.4 L1161.5,764.5 L1164.6,764.5 L1167.7,764.4 L1170.7,764.3 L1173.8,764.1 L1176.8,763.9 L1179.7,763.6 L1182.7,763.2 L1185.6,762.8 L1188.6,762.4 L1191.5,761.9 L1194.4,761.3 L1197.3,760.7 L1200.2,760.1 L1203.1,759.4 L1206.0,758.7 L1208.9,757.9 L1211.8,757.1 L1214.6,756.2 L1217.5,755.3 L1220.3,754.2 L1223.1,753.1 L1226.0,751.9 L1228.8,750.7 L1231.6,749.5 L1234.5,748.2 L1237.3,746.8 L1240.1,745.5 L1243.0,744.1 L1245.8,742.8 L1248.7,741.4 L1251.6,740.0 L1254.5,738.7 L1257.4,737.4 L1260.3,736.1 M376.9,478.1 L379.9,478.8 L382.8,479.6 L385.8,480.4 L388.8,481.2 L391.8,482.0 L394.9,482.8 L397.9,483.6 L401.0,484.4 L404.1,485.2 L407.2,486.0 L410.4,486.9 L413.5,487.7 L416.7,488.5 L419.9,489.4 L423.1,490.2 L426.3,491.1 L429.5,491.9 L432.8,492.7 L436.0,493.6 L439.3,494.5 L442.6,495.3 L445.9,496.2 L449.2,497.0 L452.5,497.9 L455.8,498.8 L459.1,499.6 L462.4,500.5 L465.8,501.4 L469.1,502.3 L472.5,503.1 L475.9,504.0 L479.2,504.9 L482.6,505.8 L486.0,506.7 L489.3,507.5 L492.7,508.4 L496.1,509.3 L499.5,510.2 L502.9,511.1 L506.2,512.0 L509.6,512.8 L513.0,513.7 L516.4,514.6 L519.7,515.5 L523.1,516.4 L526.5,517.2 L529.8,518.1 L533.2,519.0 L536.6,519.9 L539.9,520.8 L543.2,521.6 L546.6,522.5 L549.9,523.4 L553.2,524.2 L556.5,525.1 L559.8,526.0 L563.1,526.8 L566.4,527.7 L569.6,528.5 L572.9,529.4 L576.1,530.2 L579.3,531.1 L582.5,531.9 L585.7,532.8 L588.9,533.6 L592.0,534.4 L595.2,535.2 L598.3,536.1 L601.4,536.9 L604.5,537.7 L607.6,538.5 L610.6,539.3 L613.6,540.1 L616.7,540.9 L619.6,541.7 L622.6,542.5 L625.5,543.2 L628.5,544.0 L631.3,544.8 L634.2,545.5 L637.1,546.3 L639.9,547.0 L642.7,547.8 L645.4,548.5 L648.1,549.2 L650.8,550.0 L653.5,550.7 L656.2,551.4 L658.8,552.1 L661.4,552.8 L663.9,553.5 L666.4,554.1 L668.9,554.8 L671.4,555.5 L673.8,556.1 L676.2,556.8 L678.5,557.4 L680.8,558.0 L683.1,558.6 L685.3,559.2 L687.5,559.8 L689.7,560.4 L691.8,561.0 L693.9,561.6 L695.9,562.1 L697.9,562.7 L699.9,563.2 L701.8,563.8 L703.7,564.3 L705.5,564.8 L707.3,565.3 L709.0,565.8 L710.7,566.3 L712.4,566.7 L714.0,567.2 L715.5,567.6 L719.6,568.8 L723.3,569.9 L726.7,570.9 L729.8,571.8 L732.7,572.7 L735.4,573.6 L738.0,574.4 L740.5,575.1 L742.9,575.9 L745.3,576.7 L747.7,577.5 L750.3,578.3 L752.9,579.1 L755.7,580.0 L758.7,581.0 L761.3,581.8 L764.0,582.7 L766.6,583.6 L769.3,584.6 L772.0,585.5 L774.7,586.5 L777.5,587.5 L780.2,588.5 L783.1,589.5 L785.9,590.5 L788.8,591.5 L791.7,592.5 L794.6,593.5 L797.5,594.5 L800.5,595.4 L803.5,596.4 L806.6,597.3 L809.7,598.1 L812.8,599.0 L815.9,599.8 L819.1,600.5 L821.9,601.1 L824.8,601.7 L827.6,602.3 L830.6,602.9 L833.5,603.5 L836.5,604.1 L839.5,604.6 L842.6,605.2 L845.6,605.7 L848.7,606.2 L851.8,606.7 L854.9,607.2 L858.0,607.6 L861.2,608.0 L864.3,608.4 L867.5,608.8 L870.6,609.2 L873.8,609.5 L876.9,609.8 L880.1,610.1 L883.2,610.3 L886.4,610.6 L889.5,610.8 L892.7,610.9 L895.8,611.0 L898.9,611.1 L901.9,611.2 L905.1,611.2 L908.3,611.2 L911.4,611.1 L914.6,611.0 L917.7,610.8 L920.8,610.6 L924.0,610.3 L927.1,610.1 L930.2,609.8 L933.3,609.4 L936.4,609.1 L939.5,608.7 L942.6,608.3 L945.7,607.9 L948.8,607.5 L951.8,607.1 L954.9,606.6 L958.0,606.2 L961.1,605.8 L964.1,605.4 L967.2,605.0 L970.2,604.6 L973.3,604.2 L976.3,603.8 L979.4,603.5 L982.4,603.2 M379.1,469.9 L382.0,470.7 L385.0,471.5 L387.9,472.3 L390.9,473.1 L394.0,473.9 L397.0,474.7 L400.1,475.5 L403.1,476.3 L406.2,477.1 L409.4,477.9 L412.5,478.7 L415.6,479.6 L418.8,480.4 L422.0,481.2 L425.2,482.1 L428.4,482.9 L431.6,483.8 L434.9,484.6 L438.1,485.5 L441.4,486.3 L444.7,487.2 L448.0,488.1 L451.3,488.9 L454.6,489.8 L457.9,490.6 L461.2,491.5 L464.6,492.4 L467.9,493.3 L471.3,494.1 L474.6,495.0 L478.0,495.9 L481.3,496.8 L484.7,497.7 L488.1,498.5 L491.5,499.4 L494.8,500.3 L498.2,501.2 L501.6,502.1 L505.0,502.9 L508.4,503.8 L511.7,504.7 L515.1,505.6 L518.5,506.5 L521.9,507.4 L525.2,508.2 L528.6,509.1 L532.0,510.0 L535.3,510.9 L538.7,511.8 L542.0,512.6 L545.4,513.5 L548.7,514.4 L552.0,515.2 L555.3,516.1 L558.6,517.0 L561.9,517.8 L565.2,518.7 L568.5,519.5 L571.7,520.4 L575.0,521.3 L578.2,522.1 L581.4,522.9 L584.7,523.8 L587.8,524.6 L591.0,525.5 L594.2,526.3 L597.3,527.1 L600.4,527.9 L603.6,528.8 L606.6,529.6 L609.7,530.4 L612.8,531.2 L615.8,532.0 L618.8,532.8 L621.8,533.6 L624.7,534.3 L627.7,535.1 L630.6,535.9 L633.5,536.7 L636.4,537.4 L639.2,538.2 L642.0,538.9 L644.8,539.7 L647.6,540.4 L650.3,541.1 L653.0,541.8 L655.7,542.6 L658.3,543.3 L661.0,544.0 L663.5,544.7 L666.1,545.3 L668.6,546.0 L671.1,546.7 L673.6,547.3 L676.0,548.0 L678.4,548.6 L680.7,549.3 L683.0,549.9 L685.3,550.5 L687.5,551.1 L689.7,551.7 L691.9,552.3 L694.0,552.9 L696.1,553.5 L698.2,554.0 L700.2,554.6 L702.1,555.1 L704.1,555.7 L705.9,556.2 L707.8,556.7 L709.6,557.2 L711.3,557.7 L713.0,558.2 L714.7,558.7 L716.3,559.1 L717.9,559.6 L721.9,560.7 L725.7,561.8 L729.1,562.8 L732.3,563.8 L735.2,564.7 L737.9,565.5 L740.5,566.3 L743.0,567.1 L745.5,567.9 L747.9,568.7 L750.3,569.5 L752.8,570.3 L755.5,571.2 L758.3,572.0 L761.3,573.0 L763.9,573.9 L766.6,574.8 L769.3,575.7 L772.1,576.6 L774.8,577.6 L777.5,578.6 L780.3,579.6 L783.1,580.6 L785.9,581.6 L788.7,582.6 L791.5,583.6 L794.4,584.6 L797.3,585.5 L800.1,586.5 L803.0,587.4 L806.0,588.3 L808.9,589.2 L811.9,590.0 L814.9,590.8 L817.9,591.6 L820.9,592.3 L823.7,592.9 L826.5,593.5 L829.3,594.1 L832.2,594.7 L835.1,595.3 L838.1,595.8 L841.0,596.4 L844.0,596.9 L847.0,597.4 L850.0,597.9 L853.1,598.4 L856.1,598.8 L859.2,599.3 L862.3,599.7 L865.4,600.1 L868.4,600.5 L871.5,600.8 L874.6,601.1 L877.7,601.4 L880.8,601.7 L883.9,602.0 L886.9,602.2 L890.0,602.4 L893.0,602.5 L896.1,602.6 L899.1,602.7 L902.1,602.8 L905.1,602.8 L908.1,602.8 L911.1,602.7 L914.2,602.6 L917.2,602.4 L920.2,602.2 L923.2,602.0 L926.3,601.7 L929.3,601.4 L932.4,601.1 L935.4,600.7 L938.5,600.4 L941.5,600.0 L944.6,599.6 L947.6,599.2 L950.7,598.8 L953.8,598.3 L956.8,597.9 L959.9,597.5 L963.0,597.1 L966.1,596.6 L969.2,596.2 L972.3,595.9 L975.4,595.5 L978.5,595.1 L981.6,594.8 M364.9,505.6 L367.8,506.4 L370.8,507.2 L373.7,508.0 L376.6,508.8 L379.5,509.5 L382.4,510.3 L385.4,511.1 L388.3,511.9 L391.2,512.7 L394.1,513.5 L397.0,514.3 L399.9,515.1 L402.8,515.9 L405.8,516.7 L408.7,517.5 L411.6,518.3 L414.5,519.1 L417.4,519.9 L420.3,520.7 L423.2,521.5 L426.1,522.2 L429.0,523.0 L431.9,523.8 L434.8,524.6 L437.7,525.4 L440.6,526.2 L443.5,527.0 L446.4,527.8 L449.3,528.6 L452.2,529.4 L455.1,530.2 L458.1,530.9 L461.0,531.7 L463.9,532.5 L466.8,533.3 L469.7,534.1 L472.6,534.9 L475.5,535.7 L478.4,536.5 L481.3,537.3 L484.2,538.1 L487.2,538.9 L490.1,539.7 L493.0,540.5 L495.9,541.3 L498.9,542.1 L501.8,542.9 L504.7,543.7 L507.6,544.5 L510.6,545.3 L513.5,546.1 L516.4,546.9 L519.4,547.7 L522.3,548.5 L525.3,549.3 L528.2,550.1 L531.2,550.9 L534.1,551.7 L537.1,552.5 L540.1,553.4 L543.0,554.2 L546.0,555.0 L549.0,555.8 L551.9,556.6 L554.9,557.4 L557.9,558.3 L560.9,559.1 L563.9,559.9 L566.9,560.7 L569.9,561.6 L572.9,562.4 L575.9,563.2 L578.9,564.0 L581.7,564.8 L584.5,565.6 L587.4,566.4 L590.2,567.2 L593.1,568.0 L596.0,568.8 L598.8,569.6 L601.7,570.4 L604.6,571.2 L607.6,572.0 L610.5,572.8 L613.4,573.6 L616.4,574.5 L619.3,575.3 L622.3,576.1 L625.2,577.0 L628.2,577.8 L631.2,578.6 L634.2,579.5 L637.2,580.3 L640.2,581.1 L643.2,582.0 L646.2,582.8 L649.2,583.7 L652.2,584.5 L655.2,585.4 L658.2,586.2 L661.2,587.1 L664.3,587.9 L667.3,588.8 L670.3,589.6 L673.3,590.5 L676.3,591.3 L679.4,592.2 L682.4,593.0 L685.4,593.9 L688.4,594.7 L691.5,595.6 L694.5,596.4 L697.5,597.3 L700.5,598.1 L703.5,599.0 L706.5,599.8 L709.5,600.6 L712.5,601.5 L715.5,602.3 L718.5,603.2 L721.5,604.0 L724.4,604.8 L727.4,605.7 L730.4,606.5 L733.3,607.3 L736.3,608.2 L739.2,609.0 L742.1,609.8 L745.0,610.6 L748.0,611.4 L750.9,612.2 L753.7,613.0 L756.6,613.9 L759.5,614.7 L762.3,615.4 L765.2,616.2 L768.0,617.0 L770.8,617.8 L773.6,618.6 L776.4,619.4 L779.2,620.1 L782.0,620.9 L784.7,621.7 L787.4,622.4 L790.2,623.2 L792.9,623.9 L795.5,624.7 L798.2,625.4 L800.9,626.1 L803.5,626.8 L806.1,627.6 L808.7,628.3 L811.3,629.0 L813.8,629.7 L816.4,630.4 L818.9,631.1 L822.2,631.9 L825.4,632.8 L828.6,633.7 L831.8,634.6 L835.0,635.5 L838.1,636.4 L841.2,637.3 L844.3,638.2 L847.4,639.0 L850.4,639.9 L853.4,640.8 L856.4,641.6 L859.4,642.5 L862.3,643.3 L865.3,644.2 L868.2,645.0 L871.1,645.9 L874.0,646.7 L876.8,647.6 L879.7,648.4 L882.6,649.2 L885.4,650.0 L888.2,650.8 L891.1,651.6 L893.9,652.4 L896.7,653.2 L899.5,654.0 L902.3,654.7 L905.1,655.5 L907.9,656.2 L910.7,657.0 L913.5,657.7 L916.3,658.5 L919.1,659.2 L921.9,659.9 L924.7,660.6 L927.5,661.3 L930.4,662.0 L933.2,662.6 L936.0,663.3 L938.9,663.9 L941.8,664.6 L944.6,665.2 L947.5,665.8 L950.4,666.4 L953.3,667.0 L956.3,667.6 L959.2,668.1 L962.3,668.7 L965.3,669.3 L968.4,669.8 L971.5,670.4 L974.5,670.9 L977.6,671.4 L980.7,671.9 L983.8,672.5 L987.0,673.0 L990.1,673.5 L993.2,674.0 L996.3,674.4 L999.5,674.9 L1002.6,675.4 L1005.8,675.8 L1008.9,676.3 L1012.0,676.7 L1015.2,677.1 L1018.3,677.5 L1021.5,677.9 L1024.6,678.3 L1027.7,678.7 L1030.8,679.1 L1034.0,679.5 L1037.1,679.8 L1040.2,680.1 L1043.3,680.5 L1046.4,680.8 L1049.5,681.1 L1052.6,681.4 L1055.6,681.6 L1058.7,681.9 L1061.7,682.2 L1064.8,682.4 L1067.8,682.6 L1070.8,682.8 L1073.8,683.0 L1076.8,683.2 L1079.7,683.4 L1082.7,683.6 L1085.6,683.7 L1088.5,683.8 L1091.4,683.9 L1094.2,684.0 L1097.1,684.1 L1099.9,684.2 L1103.2,684.3 L1106.5,684.3 L1109.8,684.3 L1113.0,684.3 L1116.2,684.2 L1119.4,684.2 L1122.6,684.1 L1125.8,684.0 L1129.0,683.9 L1132.1,683.7 L1135.2,683.6 L1138.3,683.4 L1141.4,683.2 L1144.5,683.0 L1147.5,682.8 L1150.6,682.5 L1153.6,682.3 L1156.6,682.0 L1159.6,681.8 L1162.6,681.5 L1165.6,681.2 L1168.6,680.9 L1171.5,680.6 L1174.5,680.2 L1177.4,679.9 L1180.3,679.6 L1183.2,679.2 L1186.1,678.9 L1189.0,678.6 L1191.9,678.2 L1194.8,677.9 L1197.7,677.5 L1200.5,677.2 L1203.7,676.8 L1206.8,676.4 L1209.9,675.9 L1213.0,675.5 L1216.0,675.0 L1219.1,674.5 L1222.1,674.0 L1225.1,673.5 L1228.1,673.0 L1231.1,672.5 L1234.0,671.9 L1237.0,671.4 L1239.9,670.9 L1242.8,670.3 L1245.8,669.7 L1248.7,669.2 L1251.6,668.6 L1254.5,668.1 L1257.4,667.5 L1260.3,666.9 L1263.2,666.4 L1266.1,665.8 L1269.0,665.3 L1271.9,664.7 L1274.9,664.2 L1277.8,663.7 L1280.7,663.1 M367.1,497.4 L370.0,498.2 L373.0,499.0 L375.9,499.8 L378.8,500.6 L381.7,501.4 L384.7,502.2 L387.6,503.0 L390.5,503.8 L393.4,504.6 L396.3,505.4 L399.2,506.2 L402.1,507.0 L405.1,507.8 L408.0,508.6 L410.9,509.4 L413.8,510.2 L416.7,511.0 L419.6,511.8 L422.5,512.6 L425.4,513.4 L428.3,514.1 L431.2,514.9 L434.1,515.7 L437.0,516.5 L439.9,517.3 L442.8,518.1 L445.7,518.9 L448.6,519.7 L451.5,520.5 L454.4,521.3 L457.4,522.1 L460.3,522.8 L463.2,523.6 L466.1,524.4 L469.0,525.2 L471.9,526.0 L474.8,526.8 L477.7,527.6 L480.6,528.4 L483.5,529.2 L486.5,530.0 L489.4,530.8 L492.3,531.6 L495.2,532.4 L498.1,533.2 L501.1,534.0 L504.0,534.8 L506.9,535.6 L509.9,536.4 L512.8,537.2 L515.7,538.0 L518.7,538.8 L521.6,539.6 L524.5,540.4 L527.5,541.2 L530.4,542.0 L533.4,542.8 L536.4,543.6 L539.3,544.4 L542.3,545.3 L545.2,546.1 L548.2,546.9 L551.2,547.7 L554.2,548.5 L557.1,549.3 L560.1,550.2 L563.1,551.0 L566.1,551.8 L569.1,552.6 L572.1,553.5 L575.1,554.3 L578.1,555.1 L581.1,556.0 L583.9,556.7 L586.8,557.5 L589.6,558.3 L592.5,559.1 L595.3,559.9 L598.2,560.7 L601.1,561.5 L604.0,562.3 L606.9,563.1 L609.8,563.9 L612.7,564.7 L615.7,565.6 L618.6,566.4 L621.6,567.2 L624.5,568.0 L627.5,568.9 L630.5,569.7 L633.5,570.5 L636.4,571.4 L639.4,572.2 L642.4,573.0 L645.4,573.9 L648.4,574.7 L651.4,575.6 L654.5,576.4 L657.5,577.3 L660.5,578.1 L663.5,579.0 L666.5,579.8 L669.6,580.7 L672.6,581.5 L675.6,582.4 L678.6,583.2 L681.6,584.1 L684.7,584.9 L687.7,585.8 L690.7,586.6 L693.7,587.5 L696.8,588.3 L699.8,589.2 L702.8,590.0 L705.8,590.9 L708.8,591.7 L711.8,592.6 L714.8,593.4 L717.8,594.2 L720.8,595.1 L723.7,595.9 L726.7,596.8 L729.7,597.6 L732.6,598.4 L735.6,599.2 L738.5,600.1 L741.5,600.9 L744.4,601.7 L747.3,602.5 L750.2,603.3 L753.1,604.2 L756.0,605.0 L758.9,605.8 L761.7,606.6 L764.6,607.4 L767.4,608.2 L770.3,608.9 L773.1,609.7 L775.9,610.5 L778.7,611.3 L781.4,612.0 L784.2,612.8 L787.0,613.6 L789.7,614.3 L792.4,615.1 L795.1,615.8 L797.8,616.6 L800.4,617.3 L803.1,618.0 L805.7,618.7 L808.3,619.5 L810.9,620.2 L813.5,620.9 L816.1,621.6 L818.6,622.3 L821.1,622.9 L824.4,623.8 L827.7,624.7 L830.9,625.6 L834.1,626.5 L837.3,627.4 L840.4,628.3 L843.5,629.2 L846.6,630.1 L849.7,631.0 L852.7,631.8 L855.7,632.7 L858.7,633.6 L861.7,634.4 L864.7,635.3 L867.6,636.1 L870.5,637.0 L873.4,637.8 L876.3,638.7 L879.2,639.5 L882.0,640.3 L884.9,641.1 L887.7,641.9 L890.5,642.7 L893.3,643.5 L896.1,644.3 L898.9,645.1 L901.7,645.9 L904.5,646.6 L907.3,647.4 L910.1,648.1 L912.9,648.9 L915.6,649.6 L918.4,650.3 L921.2,651.0 L924.0,651.7 L926.7,652.4 L929.5,653.1 L932.3,653.8 L935.1,654.4 L937.9,655.1 L940.7,655.7 L943.6,656.4 L946.4,657.0 L949.2,657.6 L952.1,658.2 L955.0,658.7 L957.9,659.3 L960.8,659.9 L963.8,660.4 L966.8,661.0 L969.9,661.5 L972.9,662.1 L976.0,662.6 L979.0,663.1 L982.1,663.7 L985.2,664.2 L988.3,664.7 L991.4,665.2 L994.5,665.7 L997.6,666.1 L1000.7,666.6 L1003.8,667.1 L1006.9,667.5 L1010.1,668.0 L1013.2,668.4 L1016.3,668.8 L1019.4,669.2 L1022.5,669.6 L1025.6,670.0 L1028.7,670.4 L1031.8,670.7 L1034.9,671.1 L1038.0,671.5 L1041.1,671.8 L1044.2,672.1 L1047.2,672.4 L1050.3,672.7 L1053.3,673.0 L1056.4,673.3 L1059.4,673.5 L1062.4,673.8 L1065.4,674.0 L1068.4,674.3 L1071.4,674.5 L1074.3,674.7 L1077.3,674.8 L1080.2,675.0 L1083.1,675.2 L1086.0,675.3 L1088.8,675.4 L1091.7,675.6 L1094.5,675.6 L1097.3,675.7 L1100.1,675.8 L1103.3,675.9 L1106.6,675.9 L1109.8,675.9 L1112.9,675.9 L1116.1,675.9 L1119.3,675.8 L1122.4,675.7 L1125.5,675.6 L1128.6,675.5 L1131.7,675.4 L1134.8,675.2 L1137.8,675.0 L1140.9,674.8 L1143.9,674.6 L1146.9,674.4 L1149.9,674.2 L1152.9,673.9 L1155.9,673.7 L1158.9,673.4 L1161.8,673.1 L1164.8,672.8 L1167.7,672.5 L1170.6,672.2 L1173.6,671.9 L1176.5,671.6 L1179.4,671.2 L1182.3,670.9 L1185.2,670.6 L1188.0,670.2 L1190.9,669.9 L1193.8,669.5 L1196.6,669.2 L1199.5,668.8 L1202.6,668.4 L1205.7,668.0 L1208.7,667.6 L1211.7,667.2 L1214.8,666.7 L1217.7,666.2 L1220.7,665.7 L1223.7,665.2 L1226.6,664.7 L1229.6,664.2 L1232.5,663.7 L1235.4,663.1 L1238.4,662.6 L1241.3,662.1 L1244.2,661.5 L1247.1,660.9 L1250.0,660.4 L1252.9,659.8 L1255.8,659.3 L1258.7,658.7 L1261.6,658.1 L1264.5,657.6 L1267.5,657.0 L1270.4,656.5 L1273.3,655.9 L1276.3,655.4 L1279.3,654.9 M352.9,531.1 L355.8,531.8 L358.7,532.6 L361.6,533.4 L364.5,534.2 L367.4,535.0 L370.3,535.8 L373.1,536.6 L376.0,537.4 L378.9,538.2 L381.8,539.0 L384.7,539.8 L387.6,540.6 L390.5,541.3 L393.4,542.1 L396.3,542.9 L399.1,543.7 L402.0,544.5 L404.9,545.3 L407.8,546.1 L410.7,546.9 L413.6,547.6 L416.5,548.4 L419.3,549.2 L422.2,550.0 L425.1,550.8 L428.0,551.6 L430.9,552.4 L433.8,553.1 L436.6,553.9 L439.5,554.7 L442.4,555.5 L445.3,556.3 L448.2,557.1 L451.1,557.9 L453.9,558.7 L456.8,559.4 L459.7,560.2 L462.6,561.0 L465.5,561.8 L468.4,562.6 L471.3,563.4 L474.1,564.2 L477.0,565.0 L479.9,565.8 L482.8,566.5 L485.7,567.3 L488.6,568.1 L491.5,568.9 L494.4,569.7 L497.3,570.5 L500.2,571.3 L503.1,572.1 L506.0,572.9 L508.9,573.7 L511.8,574.5 L514.7,575.3 L517.6,576.1 L520.5,576.9 L523.4,577.7 L526.3,578.5 L529.2,579.3 L532.1,580.1 L535.0,580.9 L537.9,581.7 L540.8,582.5 L543.8,583.3 L546.7,584.1 L549.6,584.9 L552.5,585.7 L555.4,586.5 L558.4,587.3 L561.3,588.2 L564.2,589.0 L567.1,589.8 L570.1,590.6 L573.0,591.4 L575.9,592.2 L578.9,593.0 L581.7,593.8 L584.6,594.6 L587.4,595.4 L590.3,596.2 L593.2,597.0 L596.0,597.8 L598.9,598.6 L601.8,599.4 L604.6,600.3 L607.5,601.1 L610.4,601.9 L613.3,602.7 L616.2,603.5 L619.1,604.3 L622.0,605.1 L624.8,605.9 L627.7,606.8 L630.6,607.6 L633.5,608.4 L636.4,609.2 L639.3,610.0 L642.2,610.8 L645.2,611.7 L648.1,612.5 L651.0,613.3 L653.9,614.1 L656.8,615.0 L659.7,615.8 L662.6,616.6 L665.5,617.4 L668.4,618.3 L671.4,619.1 L674.3,619.9 L677.2,620.7 L680.1,621.6 L683.0,622.4 L685.9,623.2 L688.9,624.1 L691.8,624.9 L694.7,625.7 L697.6,626.5 L700.5,627.4 L703.4,628.2 L706.4,629.0 L709.3,629.9 L712.2,630.7 L715.1,631.5 L718.0,632.4 L720.9,633.2 L723.9,634.0 L726.8,634.8 L729.7,635.7 L732.6,636.5 L735.5,637.3 L738.4,638.2 L741.3,639.0 L744.2,639.8 L747.1,640.6 L750.0,641.5 L752.9,642.3 L755.8,643.1 L758.7,643.9 L761.6,644.8 L764.5,645.6 L767.4,646.4 L770.3,647.2 L773.1,648.0 L776.0,648.9 L778.9,649.7 L781.8,650.5 L784.6,651.3 L787.5,652.1 L790.4,653.0 L793.2,653.8 L796.1,654.6 L799.0,655.4 L801.8,656.2 L804.7,657.0 L807.5,657.8 L810.3,658.6 L813.2,659.4 L816.0,660.2 L818.9,661.0 L821.8,661.9 L824.8,662.7 L827.7,663.6 L830.7,664.5 L833.7,665.3 L836.7,666.2 L839.7,667.1 L842.7,668.0 L845.7,668.9 L848.7,669.8 L851.7,670.7 L854.8,671.7 L857.8,672.6 L860.8,673.5 L863.9,674.5 L866.9,675.4 L869.9,676.3 L873.0,677.3 L876.0,678.2 L879.1,679.2 L882.1,680.1 L885.1,681.1 L888.2,682.0 L891.2,683.0 L894.3,684.0 L897.3,684.9 L900.4,685.9 L903.4,686.8 L906.4,687.8 L909.5,688.7 L912.5,689.7 L915.5,690.6 L918.6,691.6 L921.6,692.5 L924.6,693.4 L927.6,694.4 L930.6,695.3 L933.6,696.2 L936.6,697.1 L939.6,698.0 L942.6,699.0 L945.5,699.9 L948.5,700.7 L951.4,701.6 L954.4,702.5 L957.3,703.4 L960.3,704.2 L963.2,705.1 L966.1,705.9 L969.0,706.8 L971.9,707.6 L974.7,708.4 L977.6,709.2 L980.4,710.0 L983.3,710.7 L986.1,711.5 L988.9,712.3 L991.7,713.0 L994.5,713.7 L997.3,714.4 L1000.0,715.1 L1002.8,715.8 L1005.5,716.5 L1008.2,717.1 L1010.9,717.8 L1013.5,718.4 L1016.2,719.0 L1018.8,719.6 L1021.5,720.2 L1024.1,720.7 L1026.7,721.3 L1029.2,721.8 L1031.8,722.3 L1034.3,722.7 L1036.8,723.2 L1039.3,723.6 L1042.8,724.2 L1046.2,724.8 L1049.7,725.3 L1053.1,725.9 L1056.5,726.4 L1059.8,726.8 L1063.2,727.3 L1066.5,727.7 L1069.8,728.1 L1073.1,728.5 L1076.3,728.9 L1079.5,729.2 L1082.7,729.5 L1085.9,729.8 L1089.1,730.1 L1092.2,730.4 L1095.3,730.6 L1098.4,730.8 L1101.5,731.0 L1104.5,731.2 L1107.5,731.3 L1110.5,731.5 L1113.5,731.6 L1116.4,731.7 L1119.3,731.8 L1122.2,731.8 L1125.1,731.9 L1128.0,731.9 L1130.8,731.9 L1133.6,731.9 L1136.4,731.9 L1139.1,731.8 L1141.9,731.8 L1144.6,731.7 L1147.3,731.6 L1150.0,731.5 L1152.6,731.3 L1155.3,731.2 L1158.7,731.0 L1162.0,730.7 L1165.3,730.4 L1168.5,730.0 L1171.7,729.6 L1174.8,729.2 L1177.9,728.7 L1180.9,728.2 L1183.9,727.7 L1186.8,727.1 L1189.8,726.5 L1192.6,725.9 L1195.5,725.3 L1198.4,724.7 L1201.2,724.0 L1204.0,723.3 L1206.9,722.6 L1209.7,721.9 L1212.5,721.2 L1215.3,720.5 L1218.2,719.8 L1221.0,719.1 L1224.1,718.3 L1227.2,717.4 L1230.3,716.6 L1233.4,715.7 L1236.5,714.8 L1239.5,713.8 L1242.5,712.9 L1245.5,711.9 L1248.5,710.9 L1251.5,709.9 L1254.5,708.9 L1257.5,707.9 L1260.5,706.9 L1263.5,705.9 L1266.4,704.9 L1269.4,703.9 L1272.4,702.9 L1275.3,701.9 L1278.3,701.0 L1281.3,700.0 M355.1,522.9 L358.0,523.7 L360.9,524.5 L363.8,525.3 L366.7,526.1 L369.6,526.9 L372.5,527.7 L375.4,528.5 L378.3,529.3 L381.1,530.1 L384.0,530.9 L386.9,531.7 L389.8,532.4 L392.7,533.2 L395.6,534.0 L398.5,534.8 L401.4,535.6 L404.2,536.4 L407.1,537.2 L410.0,538.0 L412.9,538.8 L415.8,539.5 L418.7,540.3 L421.5,541.1 L424.4,541.9 L427.3,542.7 L430.2,543.5 L433.1,544.3 L436.0,545.0 L438.8,545.8 L441.7,546.6 L444.6,547.4 L447.5,548.2 L450.4,549.0 L453.3,549.8 L456.2,550.6 L459.0,551.3 L461.9,552.1 L464.8,552.9 L467.7,553.7 L470.6,554.5 L473.5,555.3 L476.4,556.1 L479.3,556.9 L482.1,557.7 L485.0,558.4 L487.9,559.2 L490.8,560.0 L493.7,560.8 L496.6,561.6 L499.5,562.4 L502.4,563.2 L505.3,564.0 L508.2,564.8 L511.1,565.6 L514.0,566.4 L516.9,567.2 L519.8,568.0 L522.7,568.8 L525.6,569.6 L528.5,570.4 L531.4,571.2 L534.3,572.0 L537.2,572.8 L540.2,573.6 L543.1,574.4 L546.0,575.2 L548.9,576.0 L551.8,576.8 L554.7,577.6 L557.7,578.4 L560.6,579.2 L563.5,580.1 L566.5,580.9 L569.4,581.7 L572.3,582.5 L575.3,583.3 L578.2,584.1 L581.1,585.0 L584.0,585.7 L586.8,586.5 L589.7,587.3 L592.6,588.1 L595.4,588.9 L598.3,589.8 L601.2,590.6 L604.0,591.4 L606.9,592.2 L609.8,593.0 L612.7,593.8 L615.6,594.6 L618.4,595.4 L621.3,596.2 L624.2,597.0 L627.1,597.9 L630.0,598.7 L632.9,599.5 L635.8,600.3 L638.7,601.1 L641.6,601.9 L644.5,602.8 L647.4,603.6 L650.3,604.4 L653.3,605.2 L656.2,606.1 L659.1,606.9 L662.0,607.7 L664.9,608.5 L667.8,609.4 L670.7,610.2 L673.6,611.0 L676.6,611.8 L679.5,612.7 L682.4,613.5 L685.3,614.3 L688.2,615.1 L691.2,616.0 L694.1,616.8 L697.0,617.6 L699.9,618.5 L702.8,619.3 L705.7,620.1 L708.7,621.0 L711.6,621.8 L714.5,622.6 L717.4,623.4 L720.3,624.3 L723.2,625.1 L726.2,625.9 L729.1,626.8 L732.0,627.6 L734.9,628.4 L737.8,629.2 L740.7,630.1 L743.6,630.9 L746.5,631.7 L749.4,632.6 L752.3,633.4 L755.2,634.2 L758.1,635.0 L761.0,635.9 L763.9,636.7 L766.8,637.5 L769.7,638.3 L772.6,639.1 L775.4,640.0 L778.3,640.8 L781.2,641.6 L784.1,642.4 L786.9,643.2 L789.8,644.1 L792.7,644.9 L795.5,645.7 L798.4,646.5 L801.3,647.3 L804.1,648.1 L807.0,648.9 L809.8,649.7 L812.6,650.5 L815.5,651.4 L818.3,652.2 L821.1,653.0 L824.1,653.8 L827.1,654.7 L830.1,655.5 L833.1,656.4 L836.1,657.3 L839.1,658.2 L842.1,659.1 L845.1,660.0 L848.1,660.9 L851.2,661.8 L854.2,662.7 L857.2,663.6 L860.2,664.6 L863.3,665.5 L866.3,666.4 L869.4,667.4 L872.4,668.3 L875.5,669.3 L878.5,670.2 L881.6,671.2 L884.6,672.1 L887.7,673.1 L890.7,674.0 L893.8,675.0 L896.8,675.9 L899.8,676.9 L902.9,677.9 L905.9,678.8 L909.0,679.8 L912.0,680.7 L915.0,681.7 L918.0,682.6 L921.1,683.5 L924.1,684.5 L927.1,685.4 L930.1,686.3 L933.1,687.3 L936.1,688.2 L939.1,689.1 L942.0,690.0 L945.0,690.9 L948.0,691.8 L950.9,692.7 L953.8,693.6 L956.8,694.4 L959.7,695.3 L962.6,696.2 L965.5,697.0 L968.4,697.8 L971.3,698.7 L974.1,699.5 L977.0,700.3 L979.8,701.1 L982.7,701.9 L985.5,702.6 L988.3,703.4 L991.1,704.1 L993.8,704.9 L996.6,705.6 L999.3,706.3 L1002.1,707.0 L1004.8,707.7 L1007.5,708.3 L1010.1,709.0 L1012.8,709.6 L1015.4,710.2 L1018.1,710.8 L1020.7,711.4 L1023.2,712.0 L1025.8,712.5 L1028.3,713.0 L1030.9,713.5 L1033.4,714.0 L1035.8,714.5 L1038.3,714.9 L1040.7,715.4 L1044.2,715.9 L1047.6,716.5 L1051.0,717.0 L1054.3,717.6 L1057.7,718.0 L1061.0,718.5 L1064.3,719.0 L1067.6,719.4 L1070.8,719.8 L1074.0,720.2 L1077.2,720.5 L1080.4,720.9 L1083.6,721.2 L1086.7,721.5 L1089.8,721.7 L1092.9,722.0 L1095.9,722.2 L1099.0,722.4 L1102.0,722.6 L1105.0,722.8 L1107.9,723.0 L1110.9,723.1 L1113.8,723.2 L1116.7,723.3 L1119.5,723.4 L1122.4,723.4 L1125.2,723.5 L1128.0,723.5 L1130.8,723.5 L1133.5,723.5 L1136.3,723.5 L1139.0,723.4 L1141.7,723.4 L1144.3,723.3 L1147.0,723.2 L1149.6,723.1 L1152.2,723.0 L1154.7,722.8 L1158.0,722.6 L1161.3,722.3 L1164.4,722.0 L1167.5,721.7 L1170.6,721.3 L1173.6,720.9 L1176.6,720.4 L1179.5,719.9 L1182.4,719.4 L1185.2,718.9 L1188.1,718.3 L1190.9,717.7 L1193.7,717.1 L1196.5,716.5 L1199.3,715.8 L1202.1,715.1 L1204.8,714.5 L1207.6,713.8 L1210.4,713.1 L1213.3,712.4 L1216.1,711.6 L1219.0,710.9 L1222.0,710.1 L1225.0,709.3 L1228.0,708.5 L1231.0,707.6 L1234.0,706.7 L1237.0,705.8 L1240.0,704.9 L1242.9,703.9 L1245.9,703.0 L1248.9,702.0 L1251.8,701.0 L1254.8,700.0 L1257.8,699.0 L1260.8,697.9 L1263.7,696.9 L1266.7,695.9 L1269.7,694.9 L1272.7,693.9 L1275.7,693.0 L1278.7,692.0 M711.6,566.7 L714.4,567.5 L717.1,568.3 L719.9,569.1 L722.7,569.9 L725.4,570.8 L728.2,571.6 L731.0,572.6 L733.7,573.5 L736.5,574.5 L739.2,575.5 L742.0,576.5 L744.8,577.6 L747.5,578.7 L750.3,579.8 L753.1,581.0 L755.8,582.2 L758.6,583.4 L761.4,584.6 L764.1,585.9 L766.9,587.2 L769.7,588.5 L772.4,589.9 L775.2,591.3 L778.0,592.7 L780.7,594.2 L783.5,595.6 L786.3,597.1 L789.0,598.7 L791.8,600.2 L794.6,601.8 M713.8,558.6 L716.6,559.4 L719.5,560.2 L722.3,561.0 L725.1,561.9 L728.0,562.7 L730.8,563.7 L733.6,564.6 L736.5,565.6 L739.3,566.6 L742.2,567.6 L745.0,568.7 L747.8,569.8 L750.7,570.9 L753.5,572.1 L756.3,573.2 L759.2,574.5 L762.0,575.7 L764.8,577.0 L767.7,578.3 L770.5,579.6 L773.3,581.0 L776.2,582.4 L779.0,583.8 L781.8,585.2 L784.7,586.7 L787.5,588.2 L790.3,589.8 L793.2,591.3 L796.0,592.9 L798.8,594.6 M710.6,553.0 L713.4,554.7 L716.2,556.3 L719.1,557.8 L721.9,559.4 L724.7,560.9 L727.6,562.4 L730.4,563.8 L733.2,565.2 L736.1,566.6 L738.9,568.0 L741.7,569.3 L744.6,570.6 L747.4,571.9 L750.2,573.1 L753.1,574.4 L755.9,575.5 L758.7,576.7 L761.6,577.8 L764.4,578.9 L767.2,580.0 L770.1,581.0 L772.9,582.0 L775.8,583.0 L778.6,583.9 L781.4,584.9 L784.3,585.7 L787.1,586.6 L789.9,587.4 L792.8,588.2 L795.6,589.0 M714.8,545.8 L717.6,547.4 L720.4,548.9 L723.1,550.5 L725.9,552.0 L728.7,553.4 L731.4,554.9 L734.2,556.3 L737.0,557.7 L739.7,559.1 L742.5,560.4 L745.3,561.7 L748.0,563.0 L750.8,564.2 L753.6,565.4 L756.3,566.6 L759.1,567.8 L761.9,568.9 L764.6,570.0 L767.4,571.1 L770.2,572.1 L772.9,573.1 L775.7,574.1 L778.4,575.0 L781.2,576.0 L784.0,576.8 L786.7,577.7 L789.5,578.5 L792.3,579.3 L795.0,580.1 L797.8,580.9 M826.9,633.2 L829.6,634.0 L832.4,634.8 L835.2,635.7 L837.9,636.5 L840.7,637.4 L843.5,638.3 L846.2,639.3 L849.0,640.2 L851.8,641.2 L854.5,642.3 L857.3,643.3 L860.0,644.4 L862.8,645.5 L865.6,646.7 L868.3,647.9 L871.1,649.1 L873.9,650.3 L876.6,651.5 L879.4,652.8 L882.2,654.1 L885.0,655.5 L887.7,656.9 L890.5,658.3 L893.3,659.7 L896.0,661.1 L898.8,662.6 L901.6,664.1 L904.3,665.7 L907.1,667.2 L909.9,668.8 M829.1,625.1 L832.0,625.9 L834.8,626.8 L837.6,627.6 L840.5,628.5 L843.3,629.4 L846.1,630.4 L849.0,631.3 L851.8,632.3 L854.6,633.4 L857.5,634.4 L860.3,635.5 L863.2,636.6 L866.0,637.8 L868.8,638.9 L871.7,640.1 L874.5,641.4 L877.3,642.6 L880.2,643.9 L883.0,645.2 L885.8,646.6 L888.6,647.9 L891.5,649.3 L894.3,650.8 L897.1,652.2 L900.0,653.7 L902.8,655.2 L905.6,656.8 L908.5,658.3 L911.3,659.9 L914.1,661.6 M825.9,620.0 L828.7,621.7 L831.5,623.3 L834.4,624.8 L837.2,626.4 L840.0,627.9 L842.9,629.4 L845.7,630.8 L848.5,632.3 L851.4,633.7 L854.2,635.0 L857.0,636.4 L859.8,637.7 L862.7,639.0 L865.5,640.2 L868.3,641.5 L871.2,642.7 L874.0,643.8 L876.8,645.0 L879.7,646.1 L882.5,647.2 L885.4,648.2 L888.2,649.3 L891.0,650.3 L893.9,651.2 L896.7,652.2 L899.5,653.1 L902.4,654.0 L905.2,654.8 L908.0,655.7 L910.9,656.5 M830.1,612.8 L832.9,614.4 L835.7,615.9 L838.4,617.5 L841.2,619.0 L844.0,620.5 L846.7,621.9 L849.5,623.3 L852.3,624.7 L855.0,626.1 L857.8,627.5 L860.6,628.8 L863.4,630.1 L866.1,631.3 L868.9,632.5 L871.7,633.7 L874.4,634.9 L877.2,636.1 L880.0,637.2 L882.7,638.3 L885.5,639.3 L888.2,640.4 L891.0,641.4 L893.8,642.3 L896.5,643.3 L899.3,644.2 L902.1,645.1 L904.8,645.9 L907.6,646.8 L910.4,647.6 L913.1,648.4 M926.9,691.3 L929.6,692.1 L932.4,692.9 L935.2,693.8 L937.9,694.6 L940.7,695.5 L943.5,696.5 L946.2,697.4 L949.0,698.4 L951.7,699.4 L954.5,700.4 L957.3,701.5 L960.0,702.6 L962.8,703.7 L965.6,704.9 L968.3,706.0 L971.1,707.2 L973.9,708.5 L976.6,709.7 L979.4,711.0 L982.2,712.3 L985.0,713.7 L987.7,715.0 L990.5,716.4 L993.3,717.9 L996.0,719.3 L998.8,720.8 L1001.6,722.3 L1004.3,723.9 L1007.1,725.4 L1009.9,727.0 M929.1,683.2 L932.0,684.0 L934.8,684.9 L937.6,685.7 L940.5,686.6 L943.3,687.6 L946.1,688.5 L949.0,689.5 L951.8,690.5 L954.7,691.5 L957.5,692.6 L960.3,693.7 L963.2,694.8 L966.0,695.9 L968.8,697.1 L971.7,698.3 L974.5,699.5 L977.3,700.8 L980.2,702.1 L983.0,703.4 L985.8,704.8 L988.6,706.1 L991.5,707.5 L994.3,709.0 L997.1,710.4 L1000.0,711.9 L1002.8,713.4 L1005.6,715.0 L1008.5,716.5 L1011.3,718.1 L1014.1,719.8 M925.9,678.2 L928.7,679.9 L931.5,681.5 L934.4,683.0 L937.2,684.6 L940.0,686.1 L942.9,687.6 L945.7,689.0 L948.5,690.5 L951.4,691.9 L954.2,693.2 L957.0,694.6 L959.8,695.9 L962.7,697.2 L965.5,698.5 L968.3,699.7 L971.2,700.9 L974.0,702.1 L976.8,703.2 L979.7,704.3 L982.5,705.4 L985.3,706.5 L988.2,707.5 L991.0,708.5 L993.9,709.5 L996.7,710.4 L999.5,711.4 L1002.4,712.3 L1005.2,713.1 L1008.0,714.0 L1010.9,714.8 M930.1,671.0 L932.9,672.6 L935.7,674.1 L938.4,675.7 L941.2,677.2 L944.0,678.7 L946.7,680.1 L949.5,681.6 L952.3,683.0 L955.0,684.3 L957.8,685.7 L960.6,687.0 L963.4,688.3 L966.1,689.5 L968.9,690.8 L971.7,692.0 L974.4,693.1 L977.2,694.3 L980.0,695.4 L982.7,696.5 L985.5,697.6 L988.3,698.6 L991.0,699.6 L993.8,700.6 L996.5,701.5 L999.3,702.5 L1002.1,703.4 L1004.8,704.2 L1007.6,705.1 L1010.4,705.9 L1013.1,706.7 M751.0,519.6 L789.0,529.1 M753.0,511.4 L791.0,520.9 M949.3,566.1 L984.3,572.1 M950.7,557.9 L985.7,563.9 M1118.0,576.7 L1160.0,576.7 M1118.0,568.3 L1160.0,568.3 M1118.0,604.2 L1160.0,604.2 M1118.0,595.8 L1160.0,595.8" fill="none" stroke="#1a1a1a" stroke-width="1.1"/>
<path d="M1119.4,308.7 L1122.4,308.7 L1125.4,308.8 L1128.4,308.9 L1131.4,309.0 L1134.4,309.2 L1137.4,309.4 L1140.4,309.6 L1143.4,309.9 L1146.4,310.2 L1149.4,310.5 L1152.4,310.9 L1155.4,311.3 L1158.4,311.8 L1161.3,312.3 L1164.3,312.8 L1167.2,313.4 L1170.2,314.0 L1173.1,314.6 L1176.1,315.3 L1179.0,316.0 L1181.9,316.7 L1184.8,317.5 L1187.7,318.3 L1190.6,319.2 L1193.5,320.1 L1196.3,321.0 L1199.2,321.9 L1202.0,322.9 L1204.9,323.9 L1207.7,325.0 L1210.5,326.1 L1213.3,327.2 L1216.0,328.4 L1218.8,329.6 L1221.6,330.8 L1224.3,332.1 L1227.0,333.4 L1229.7,334.7 L1232.4,336.0 L1235.1,337.4 L1237.7,338.9 L1240.3,340.3 L1243.0,341.8 L1245.5,343.3 L1248.1,344.9 L1250.7,346.5 L1253.2,348.1 L1255.7,349.7 L1258.2,351.4 L1260.7,353.1 L1263.2,354.8 L1265.6,356.6 L1268.0,358.4 L1270.4,360.2 L1272.8,362.1 L1275.1,364.0 L1277.5,365.9 L1279.8,367.8 L1282.0,369.8 L1284.3,371.8 L1286.5,373.8 L1288.7,375.8 L1290.9,377.9 L1293.1,380.0 L1295.2,382.1 L1297.3,384.3 L1299.4,386.5 L1301.4,388.7 L1303.4,390.9 L1305.4,393.2 L1307.4,395.4 L1309.3,397.7 L1311.2,400.1 L1313.1,402.4 L1315.0,404.8 L1316.8,407.2 L1318.6,409.6 L1320.4,412.0 L1322.1,414.5 L1323.8,417.0 L1325.5,419.5 L1327.1,422.0 L1328.7,424.5 L1330.3,427.1 L1331.9,429.7 L1333.4,432.2 L1334.9,434.9 L1336.3,437.5 L1337.8,440.1 L1339.2,442.8 L1340.5,445.5 L1341.8,448.2 L1343.1,450.9 L1344.4,453.6 L1345.6,456.4 L1346.8,459.2 L1348.0,461.9 L1349.1,464.7 L1350.2,467.5 L1351.3,470.3 L1352.3,473.2 L1353.3,476.0 L1354.2,478.9 L1355.1,481.7 L1356.0,484.6 L1356.9,487.5 L1357.7,490.4 L1358.5,493.3 L1359.2,496.2 L1359.9,499.1 L1360.6,502.1 L1361.2,505.0 L1361.8,508.0 L1362.4,510.9 L1362.9,513.9 L1363.4,516.8 L1363.9,519.8 L1364.3,522.8 L1364.7,525.8 L1365.0,528.8 L1365.3,531.8 L1365.6,534.8 L1365.8,537.8 L1366.0,540.8 L1366.2,543.8 L1366.3,546.8 L1366.4,549.8 L1366.5,552.8 L1366.5,555.8 M1119.4,300.3 L1122.5,300.3 L1125.6,300.4 L1128.7,300.5 L1131.8,300.6 L1134.9,300.8 L1138.1,301.0 L1141.2,301.2 L1144.2,301.5 L1147.3,301.8 L1150.4,302.2 L1153.5,302.6 L1156.6,303.0 L1159.7,303.5 L1162.7,304.0 L1165.8,304.6 L1168.9,305.1 L1171.9,305.8 L1175.0,306.4 L1178.0,307.1 L1181.0,307.8 L1184.0,308.6 L1187.0,309.4 L1190.0,310.3 L1193.0,311.1 L1196.0,312.0 L1198.9,313.0 L1201.9,314.0 L1204.8,315.0 L1207.8,316.1 L1210.7,317.2 L1213.6,318.3 L1216.5,319.5 L1219.3,320.7 L1222.2,321.9 L1225.0,323.2 L1227.8,324.5 L1230.7,325.8 L1233.4,327.2 L1236.2,328.6 L1239.0,330.0 L1241.7,331.5 L1244.4,333.0 L1247.2,334.5 L1249.8,336.1 L1252.5,337.7 L1255.1,339.3 L1257.8,341.0 L1260.4,342.7 L1263.0,344.4 L1265.5,346.2 L1268.1,348.0 L1270.6,349.8 L1273.1,351.7 L1275.6,353.6 L1278.0,355.5 L1280.4,357.4 L1282.8,359.4 L1285.2,361.4 L1287.6,363.4 L1289.9,365.5 L1292.2,367.6 L1294.5,369.7 L1296.7,371.9 L1299.0,374.0 L1301.2,376.2 L1303.3,378.5 L1305.5,380.7 L1307.6,383.0 L1309.7,385.3 L1311.8,387.6 L1313.8,390.0 L1315.8,392.4 L1317.8,394.8 L1319.7,397.2 L1321.6,399.6 L1323.5,402.1 L1325.4,404.6 L1327.2,407.1 L1329.0,409.7 L1330.8,412.2 L1332.5,414.8 L1334.2,417.4 L1335.9,420.1 L1337.5,422.7 L1339.1,425.4 L1340.7,428.0 L1342.2,430.8 L1343.7,433.5 L1345.2,436.2 L1346.6,439.0 L1348.0,441.8 L1349.4,444.5 L1350.7,447.4 L1352.0,450.2 L1353.3,453.0 L1354.5,455.9 L1355.7,458.7 L1356.9,461.6 L1358.0,464.5 L1359.1,467.4 L1360.2,470.4 L1361.2,473.3 L1362.2,476.3 L1363.2,479.2 L1364.1,482.2 L1364.9,485.2 L1365.8,488.2 L1366.6,491.2 L1367.4,494.2 L1368.1,497.2 L1368.8,500.2 L1369.4,503.3 L1370.1,506.3 L1370.6,509.4 L1371.2,512.5 L1371.7,515.5 L1372.2,518.6 L1372.6,521.7 L1373.0,524.8 L1373.4,527.9 L1373.7,531.0 L1374.0,534.0 L1374.2,537.1 L1374.4,540.3 L1374.6,543.4 L1374.7,546.5 L1374.8,549.6 L1374.9,552.7 L1374.9,555.8" fill="none" stroke="#7a7a7a" stroke-width="1.1"/>
<path d="M997.7,297.5L997.7,311.5M882.0,297.5L882.0,311.5M710.5,297.5L710.5,311.5M592.6,297.5L592.6,311.5M459.5,333.2L466.5,345.3M362.2,430.5L374.3,437.5M326.5,563.6L340.5,563.6M362.2,696.6L374.3,689.6M459.5,794.0L466.5,781.9M592.6,829.7L592.6,815.7M759.3,829.7L759.3,815.7M874.5,829.7L874.5,815.7M991.0,829.7L991.0,815.7M1106.2,829.7L1106.2,815.7M1242.0,793.3L1235.0,781.2M1341.5,693.9L1329.4,686.9M1377.9,558.0L1363.9,558.0M399.2,688.2L388.9,697.7M469.0,738.9L463.1,751.6M599.9,775.8L600.1,761.8M716.9,777.6L717.1,763.6M1011.8,782.2L1012.1,768.2M1128.3,784.0L1128.5,770.0M1255.3,752.1L1248.5,739.8M1344.7,668.4L1332.9,660.8M506.1,484.4L509.5,470.8M616.9,514.2L621.1,500.8M715.6,559.1L722.4,546.9M1006.9,728.3L1013.1,715.7M1148.7,775.1L1150.0,761.1M488.6,510.3L492.2,496.7M600.7,539.6L604.3,526.0M714.8,570.3L718.6,556.9M796.7,597.1L801.0,583.8M477.7,539.2L481.4,525.7M589.5,569.9L593.2,556.4M699.7,600.8L703.5,587.3M815.6,633.1L819.3,619.6M918.4,661.9L921.9,648.3M464.7,564.5L468.4,551.0M578.1,595.7L581.9,582.3M691.0,627.6L694.8,614.1M803.9,659.7L807.7,646.2M914.7,693.3L918.9,679.9M1018.2,722.3L1021.3,708.7M1150.0,579.5L1150.0,565.5M1150.0,607.0L1150.0,593.0" stroke="#222" stroke-width="1"/>
<path d="M1241.6,344.2L1248.6,332.1M1331.0,433.6L1343.1,426.6" stroke="#777" stroke-width="1"/>
<text transform="translate(940.0,306.5) rotate(0.0)" font-size="7.5" fill="#6a7a9a" text-anchor="middle" font-style="italic">G1</text>
<text transform="translate(1055.0,306.5) rotate(0.0)" font-size="7.5" fill="#6a7a9a" text-anchor="middle" font-style="italic">G1</text>
<text transform="translate(816.9,825.0) rotate(0.0)" font-size="7.5" fill="#6a7a9a" text-anchor="middle" font-style="italic">G1</text>
<text transform="translate(932.7,825.0) rotate(0.0)" font-size="7.5" fill="#6a7a9a" text-anchor="middle" font-style="italic">G1</text>
<text transform="translate(1048.5,825.0) rotate(0.0)" font-size="7.5" fill="#6a7a9a" text-anchor="middle" font-style="italic">G1</text>
<text transform="translate(658.0,772.5) rotate(0.0)" font-size="7.5" fill="#6a7a9a" text-anchor="middle" font-style="italic">G1</text>
<text transform="translate(1070.0,781.0) rotate(0.0)" font-size="7.5" fill="#6a7a9a" text-anchor="middle" font-style="italic">G1</text>
<text transform="translate(522.0,317.0) rotate(-20.0)" font-size="7.5" fill="#6a7a9a" text-anchor="middle" font-style="italic">R5</text>
<text transform="translate(405.0,382.0) rotate(-50.0)" font-size="7.5" fill="#aaa" text-anchor="middle" font-style="italic">R4</text>
<text transform="translate(344.0,490.0) rotate(-75.0)" font-size="7.5" fill="#6a7a9a" text-anchor="middle" font-style="italic">R4</text>
<text transform="translate(400.0,747.0) rotate(35.0)" font-size="7.5" fill="#6a7a9a" text-anchor="middle" font-style="italic">R5</text>
<text transform="translate(528.0,817.0) rotate(12.0)" font-size="7.5" fill="#6a7a9a" text-anchor="middle" font-style="italic">R5</text>
<text transform="translate(1178.0,812.0) rotate(-20.0)" font-size="7.5" fill="#6a7a9a" text-anchor="middle" font-style="italic">R5</text>
<text transform="translate(1300.0,745.0) rotate(-50.0)" font-size="7.5" fill="#6a7a9a" text-anchor="middle" font-style="italic">R5</text>
<text transform="translate(1185.0,318.0) rotate(20.0)" font-size="7.5" fill="#d8ffd8" text-anchor="middle" font-style="italic">R5</text>
<text transform="translate(1297.0,381.0) rotate(45.0)" font-size="7.5" fill="#d8ffd8" text-anchor="middle" font-style="italic">R5</text>
<text transform="translate(1358.0,489.0) rotate(75.0)" font-size="7.5" fill="#d8ffd8" text-anchor="middle" font-style="italic">R5</text>
<text transform="translate(340.0,630.0) rotate(78.0)" font-size="7.5" fill="#6a7a9a" text-anchor="middle" font-style="italic">BW3/4</text>
<text transform="translate(1180.0,775.0) rotate(-15.0)" font-size="7.5" fill="#6a7a9a" text-anchor="middle" font-style="italic">BWs3/4</text>
<text transform="translate(1368.0,680.0) rotate(-70.0)" font-size="7.5" fill="#6a7a9a" text-anchor="middle" font-style="italic">BWs3/4</text>
<text transform="translate(902.0,608.0) rotate(0.0)" font-size="7.5" fill="#6a7a9a" text-anchor="middle" font-style="italic">R6</text>
<text transform="translate(670.0,525.0) rotate(25.0)" font-size="7.5" fill="#6a7a9a" text-anchor="middle" font-style="italic">R6</text>
<text transform="translate(1087.0,752.0) rotate(20.0)" font-size="7.5" fill="#6a7a9a" text-anchor="middle" font-style="italic">R5</text>
<text transform="translate(563.2,494.2) rotate(14.7)" font-size="7.5" fill="#6a7a9a" text-anchor="middle" font-style="italic">G1</text>
<text transform="translate(547.6,520.9) rotate(14.7)" font-size="7.5" fill="#6a7a9a" text-anchor="middle" font-style="italic">G1</text>
<text transform="translate(659.9,550.5) rotate(15.0)" font-size="7.5" fill="#6a7a9a" text-anchor="middle" font-style="italic">G1</text>
<text transform="translate(535.2,550.2) rotate(15.3)" font-size="7.5" fill="#6a7a9a" text-anchor="middle" font-style="italic">G1</text>
<text transform="translate(647.3,581.3) rotate(15.7)" font-size="7.5" fill="#6a7a9a" text-anchor="middle" font-style="italic">G1</text>
<text transform="translate(760.6,613.1) rotate(15.6)" font-size="7.5" fill="#6a7a9a" text-anchor="middle" font-style="italic">G1</text>
<text transform="translate(869.3,643.5) rotate(16.2)" font-size="7.5" fill="#6a7a9a" text-anchor="middle" font-style="italic">G1</text>
<text transform="translate(524.5,576.1) rotate(15.4)" font-size="7.5" fill="#6a7a9a" text-anchor="middle" font-style="italic">G1</text>
<text transform="translate(637.6,607.7) rotate(15.8)" font-size="7.5" fill="#6a7a9a" text-anchor="middle" font-style="italic">G1</text>
<text transform="translate(748.3,639.1) rotate(15.9)" font-size="7.5" fill="#6a7a9a" text-anchor="middle" font-style="italic">G1</text>
<text transform="translate(862.1,672.0) rotate(17.1)" font-size="7.5" fill="#6a7a9a" text-anchor="middle" font-style="italic">G1</text>
<text transform="translate(967.2,704.4) rotate(16.1)" font-size="7.5" fill="#6a7a9a" text-anchor="middle" font-style="italic">G1</text>
<text transform="translate(452.2,466.3) rotate(14.0)" font-size="7.5" fill="#6a7a9a" text-anchor="middle" font-style="italic">G1</text>
<text transform="translate(433.8,491.2) rotate(14.7)" font-size="7.5" fill="#6a7a9a" text-anchor="middle" font-style="italic">G1</text>
<text transform="translate(424.3,519.9) rotate(15.2)" font-size="7.5" fill="#6a7a9a" text-anchor="middle" font-style="italic">G1</text>
<text transform="translate(411.8,545.3) rotate(15.3)" font-size="7.5" fill="#6a7a9a" text-anchor="middle" font-style="italic">G1</text>
<text transform="translate(768.0,583.0) rotate(30.0)" font-size="7.5" fill="#6a7a9a" text-anchor="middle" font-style="italic">DWW15</text>
<text transform="translate(870.0,651.0) rotate(30.0)" font-size="7.5" fill="#6a7a9a" text-anchor="middle" font-style="italic">DWW15</text>
<text transform="translate(972.0,710.0) rotate(30.0)" font-size="7.5" fill="#6a7a9a" text-anchor="middle" font-style="italic">DWW15</text>
<g transform="translate(390,448) rotate(14.5)"><path d="M0,0 L14,-7.5 L10,0 L14,7.5 Z" fill="#808080"/></g>
<g transform="translate(372,472.5) rotate(14.5)"><path d="M0,0 L14,-7.5 L10,0 L14,7.5 Z" fill="#808080"/></g>
<g transform="translate(360.3,500) rotate(15)"><path d="M0,0 L14,-7.5 L10,0 L14,7.5 Z" fill="#808080"/></g>
<g transform="translate(348,526) rotate(15)"><path d="M0,0 L14,-7.5 L10,0 L14,7.5 Z" fill="#808080"/></g>
<g transform="translate(747,516.5) rotate(14)"><path d="M0,0 L14,-7.5 L10,0 L14,7.5 Z" fill="#808080"/></g>
<g transform="translate(1287,658.5) rotate(188)"><path d="M0,0 L14,-7.5 L10,0 L14,7.5 Z" fill="#808080"/></g>
<g transform="translate(1287,695) rotate(196)"><path d="M0,0 L14,-7.5 L10,0 L14,7.5 Z" fill="#808080"/></g>
<g transform="translate(1272,568.7) rotate(180)"><path d="M0,0 L14,-7.5 L10,0 L14,7.5 Z" fill="#808080"/></g>
<g transform="translate(1277,597.4) rotate(180)"><path d="M0,0 L14,-7.5 L10,0 L14,7.5 Z" fill="#808080"/></g>
<path d="M1108.5,292 A13,13 0 0 1 1108.5,317" fill="none" stroke="#111" stroke-width="2.6"/><path d="M1108.5,292 l-2,0 M1108.5,317 l-2.5,0.5" stroke="#111" stroke-width="2"/>
<path d="M1358.5,554 A13,13 0 0 1 1384,554" fill="none" stroke="#111" stroke-width="2.6"/><path d="M1358.5,554 l0,2.5 M1384,554 l0.5,2.5" stroke="#111" stroke-width="2"/>
<text x="413.0" y="150.0" font-size="19" fill="#000" stroke="#000" stroke-width="0.42" text-anchor="start" textLength="752.0" lengthAdjust="spacingAndGlyphs">AMBIENTAZIONE: Epoca II , Francia occupata durante la 2a Guerra mondiale</text>
<text x="419.0" y="181.0" font-size="19" fill="#000" stroke="#000" stroke-width="0.42" text-anchor="start" textLength="732.0" lengthAdjust="spacingAndGlyphs">Binari e piattaforma girevole: Roco, alimentazione digitale , edifici Faller</text>
<text x="1237.6" y="323.7" font-size="25" fill="#000" stroke="#000" stroke-width="0.55" text-anchor="start" textLength="114.4" lengthAdjust="spacingAndGlyphs">montagna</text>
<text x="919.8" y="383.3" font-size="20" fill="#000" stroke="#000" stroke-width="0.44" text-anchor="start" textLength="330.8" lengthAdjust="spacingAndGlyphs">fiume che scende dalla montagna</text>
<text x="428.4" y="389.7" font-size="15" fill="#000" stroke="#000" stroke-width="0.33" text-anchor="start" textLength="65.0" lengthAdjust="spacingAndGlyphs">stradina</text>
<text x="386.6" y="423.8" font-size="15" fill="#000" stroke="#000" stroke-width="0.33" text-anchor="start" textLength="104.4" lengthAdjust="spacingAndGlyphs">carica sabbia</text>
<text transform="translate(533.8,427.2) rotate(-19.0)" x="0" y="0" font-size="16" fill="#000" stroke="#000" stroke-width="0.35" text-anchor="start" textLength="118.0" lengthAdjust="spacingAndGlyphs">Carico carbone</text>
<text x="676.4" y="459.2" font-size="15.5" fill="#000" stroke="#000" stroke-width="0.34" text-anchor="start" textLength="67.4" lengthAdjust="spacingAndGlyphs">Deposito</text>
<text x="668.2" y="470.3" font-size="15.5" fill="#000" stroke="#000" stroke-width="0.34" text-anchor="start" textLength="59.4" lengthAdjust="spacingAndGlyphs">ricambi</text>
<text x="672.3" y="488.5" font-size="15.5" fill="#000" stroke="#000" stroke-width="0.34" text-anchor="start" textLength="102.4" lengthAdjust="spacingAndGlyphs">x locomotive</text>
<text transform="translate(624.0,513.0) rotate(-52.6)" x="0" y="0" font-size="16" fill="#000" stroke="#000" stroke-width="0.35" text-anchor="start" textLength="83.0" lengthAdjust="spacingAndGlyphs">RIF ACQUA</text>
<text x="782.8" y="446.3" font-size="15" fill="#000" stroke="#000" stroke-width="0.33" text-anchor="start" textLength="64.2" lengthAdjust="spacingAndGlyphs">stradina</text>
<text x="730.0" y="539.7" font-size="15.5" fill="#000" stroke="#000" stroke-width="0.34" text-anchor="start" textLength="248.5" lengthAdjust="spacingAndGlyphs">Officina con fossa x riparazioni</text>
<text x="1037.5" y="486.5" font-size="15" fill="#000" stroke="#000" stroke-width="0.33" text-anchor="start" textLength="64.7" lengthAdjust="spacingAndGlyphs">stradina</text>
<text x="1170.0" y="582.3" font-size="16" fill="#000" stroke="#000" stroke-width="0.35" text-anchor="start" textLength="182.9" lengthAdjust="spacingAndGlyphs">Rimessa x2 locomotive</text>
<text x="435.4" y="587.6" font-size="19" fill="#000" stroke="#000" stroke-width="0.42" text-anchor="start" textLength="114.7" lengthAdjust="spacingAndGlyphs">piattaforma</text>
<text x="435.4" y="615.9" font-size="19" fill="#000" stroke="#000" stroke-width="0.42" text-anchor="start" textLength="84.8" lengthAdjust="spacingAndGlyphs">di carico</text>
<text x="440.7" y="630.3" font-size="15" fill="#000" stroke="#000" stroke-width="0.33" text-anchor="start" textLength="43.8" lengthAdjust="spacingAndGlyphs">merci</text>
<text x="389.0" y="575.0" font-size="13" fill="#000" stroke="#000" stroke-width="0.29" text-anchor="start" textLength="28.0" lengthAdjust="spacingAndGlyphs">GRU</text>
<text x="467.7" y="697.0" font-size="15" fill="#000" stroke="#000" stroke-width="0.33" text-anchor="start" textLength="64.1" lengthAdjust="spacingAndGlyphs">stradina</text>
<text x="616.5" y="696.5" font-size="20" fill="#000" stroke="#000" stroke-width="0.44" text-anchor="start" textLength="192.4" lengthAdjust="spacingAndGlyphs">Stazione passeggeri</text>
<text x="367.5" y="800.8" font-size="15" fill="#000" stroke="#000" stroke-width="0.33" text-anchor="start" textLength="64.5" lengthAdjust="spacingAndGlyphs">stradina</text>
<text x="609.1" y="807.6" font-size="20" fill="#000" stroke="#000" stroke-width="0.44" text-anchor="start" textLength="116.5" lengthAdjust="spacingAndGlyphs">piattaforma</text>
<text x="947.4" y="805.7" font-size="15" fill="#000" stroke="#000" stroke-width="0.33" text-anchor="start" textLength="86.2" lengthAdjust="spacingAndGlyphs">RIF ACQUA</text>
<text x="907.5" y="746.5" font-size="15" fill="#000" stroke="#000" stroke-width="0.33" text-anchor="start" textLength="65.9" lengthAdjust="spacingAndGlyphs">stradina</text>
</g>
<rect x="1574" y="109" width="22" height="22" fill="#f0f0f0"/>
<path d="M1574,130.5H1595.5V109" stroke="#a0a0a0" stroke-width="1.2" fill="none"/>
<path d="M1580,122.5 L1590,122.5 L1585,116.5 Z" fill="none" stroke="#222" stroke-width="1.3"/>
<rect x="1574" y="808.5" width="22" height="21.5" fill="#f0f0f0"/>
<path d="M1574,829.5H1595.5V808.5" stroke="#a0a0a0" stroke-width="1.2" fill="none"/>
<path d="M1580,816 L1590,816 L1585,822 Z" fill="none" stroke="#222" stroke-width="1.3"/>
<rect x="1549" y="833" width="22" height="22" fill="#f0f0f0"/>
<path d="M1549,854.5H1570.5V833" stroke="#a0a0a0" stroke-width="1.2" fill="none"/>
<path d="M1557,839 L1557,849 L1563,844 Z" fill="none" stroke="#222" stroke-width="1.3"/>
<rect x="109.5" y="833" width="21" height="21.5" fill="#f0f0f0"/>
<path d="M109.5,854.0H130.0V833" stroke="#a0a0a0" stroke-width="1.2" fill="none"/>
<path d="M121.5,839.5 L121.5,848 L116.5,843.7 Z" fill="none" stroke="#222" stroke-width="1.3"/>
<rect x="0" y="859" width="1598" height="18" fill="#f0f0f0"/>
<rect x="0" y="859" width="118" height="1" fill="#c4c4c4"/>
<rect x="122" y="859" width="1390" height="1" fill="#c4c4c4"/>
<rect x="1514" y="859" width="84" height="1" fill="#c4c4c4"/>
<rect x="118" y="860" width="1" height="17" fill="#c8c8c8"/>
<rect x="122" y="860" width="1" height="17" fill="#c8c8c8"/>
<rect x="1513" y="860" width="1" height="17" fill="#c8c8c8"/>
<path d="M3.5,862.5 L3.5,873.5 L6,871 L8.3,875 L9.8,874.2 L7.7,870.3 L11,870.3 Z" fill="#fff" stroke="#000" stroke-width="1"/>
<text x="14.5" y="872.5" font-size="12.5" fill="#111" text-anchor="start" font-weight="normal" textLength="54.5" lengthAdjust="spacingAndGlyphs">-375; -307</text>
<circle cx="1520.5" cy="866.5" r="3.6" fill="none" stroke="#000" stroke-width="1.4"/><path d="M1523,869 L1527,873" stroke="#000" stroke-width="2"/>
<text x="1530.0" y="873.0" font-size="12" fill="#000" text-anchor="start" font-weight="normal" textLength="29.0" lengthAdjust="spacingAndGlyphs">0,47x</text>
<path d="M1586,876 L1596,866 M1590,876 L1596,870 M1594,876 L1596,874" stroke="#b0b0b0" stroke-width="1"/>
<path d="M6.5,62.5 H15.5 L20.5,67.5 V77.5 H6.5 Z" fill="#d8e4f4" stroke="#3a4a60" stroke-width="1.1"/><path d="M15.5,62.5 V67.5 H20.5" fill="#f4f8fc" stroke="#3a4a60" stroke-width="0.9"/>
<path d="M30.5,66 H36 L38,68 H45 V77.5 H30.5 Z" fill="#e8d87a" stroke="#3c3418" stroke-width="1"/><path d="M30.5,77.5 L34,70.5 H49 L45,77.5 Z" fill="#f4e88a" stroke="#3c3418" stroke-width="1"/><path d="M40,64 Q44,59 48,63" fill="none" stroke="#222" stroke-width="1.1"/><path d="M46.5,61.5 L49,64 L45.5,64.5 Z" fill="#222"/>
<rect x="59" y="62" width="15.5" height="15.5" rx="1.5" fill="#000"/><rect x="61" y="62.5" width="11.5" height="6.5" fill="#fff"/><rect x="61" y="62" width="11.5" height="1.2" fill="#e00"/><rect x="63.5" y="72" width="7" height="5" fill="#aaa"/><rect x="66" y="73.5" width="2" height="2" fill="#000"/>
<path d="M94.5,71 V63 H100 L103,66 V71" fill="#f4f4f4" stroke="#333" stroke-width="1"/><rect x="92" y="70.5" width="17" height="5" rx="1" fill="#e8e8e8" stroke="#333" stroke-width="1.1"/><rect x="92.5" y="76" width="16" height="2.5" fill="#333"/><rect x="105" y="72" width="2" height="1.5" fill="#f06060"/>
<path d="M119.5,61.5 H128 L131.5,65 V78 H119.5 Z" fill="#d0ddf0" stroke="#444" stroke-width="1"/><circle cx="127" cy="70" r="4.6" fill="#b8d4f4" stroke="#333" stroke-width="1.2"/><path d="M130.5,73.5 L135,78" stroke="#333" stroke-width="2"/>
<path d="M153,64.5 L165.5,70 L153,75.5 L156.5,70 Z" fill="#e00000" stroke="#600" stroke-width="0.6"/>
<path d="M195,64.5 L185.5,70 L195,75.5 L192,70 Z" fill="#606060"/><path d="M188,64.5 L177,70 L188,75.5 L184.5,70 Z" fill="#e00000" stroke="#700" stroke-width="0.5"/>
<path d="M203,64.5 L212.5,70 L203,75.5 L206,70 Z" fill="#606060"/><path d="M210,64.5 L221,70 L210,75.5 L213.5,70 Z" fill="#e00000" stroke="#700" stroke-width="0.5"/>
<path d="M240,59.5 L246,72 M252,59.5 L246,72" stroke="#a3a3a3" stroke-width="2.2" fill="none"/><circle cx="243" cy="76" r="2.8" fill="none" stroke="#a3a3a3" stroke-width="1.2"/><circle cx="249" cy="76" r="2.8" fill="none" stroke="#a3a3a3" stroke-width="1.2"/>
<path d="M262.5,59.5 H270 L273,62.5 V76.5 H262.5 Z" fill="#f0f0f0" stroke="#a3a3a3" stroke-width="1"/><path d="M268.5,64 H276 L282,70 V80 H268.5 Z" fill="#f0f0f0" stroke="#a3a3a3" stroke-width="1"/>
<rect x="289.5" y="61" width="15" height="18" rx="2" fill="#f0f0f0" stroke="#a3a3a3" stroke-width="1.1"/><rect x="294" y="59.5" width="6" height="3" fill="#f0f0f0" stroke="#a3a3a3" stroke-width="1"/><rect x="296" y="66.5" width="13" height="14" fill="#f0f0f0" stroke="#a3a3a3" stroke-width="1"/>
<path d="M318.5,63.5 L333,77 M333,63.5 L318.5,77" stroke="#a3a3a3" stroke-width="3.2"/><path d="M318.5,63.5 L333,77 M333,63.5 L318.5,77" stroke="#f0f0f0" stroke-width="1.3"/>
<path d="M354,76 A7.5,7.5 0 1 1 363,76" fill="none" stroke="#a3a3a3" stroke-width="3.4"/><path d="M354,76 A7.5,7.5 0 1 1 363,76" fill="none" stroke="#f0f0f0" stroke-width="1.4"/>
<path d="M384,75 V65 L388,68 Q394,62 400,70" fill="none" stroke="#a3a3a3" stroke-width="3.2"/><path d="M384,75 V65 L388,68 Q394,62 400,70" fill="none" stroke="#f0f0f0" stroke-width="1.2"/>
<path d="M426,75 V65 L422,68 Q416,62 410,70" fill="none" stroke="#a3a3a3" stroke-width="3.2"/><path d="M426,75 V65 L422,68 Q416,62 410,70" fill="none" stroke="#f0f0f0" stroke-width="1.2"/>
<path d="M454.0,71.5 L459.5,77.5" stroke="#333" stroke-width="2.6" stroke-linecap="round"/><circle cx="449.5" cy="67" r="6.3" fill="#e4eefa" stroke="#333" stroke-width="1.4"/>
<path d="M446.5,67 H452.5" stroke="#2050c0" stroke-width="2"/>
<path d="M449.5,64 V70" stroke="#2050c0" stroke-width="2"/>
<path d="M481.0,71.5 L486.5,77.5" stroke="#333" stroke-width="2.6" stroke-linecap="round"/><circle cx="476.5" cy="67" r="6.3" fill="#e4eefa" stroke="#333" stroke-width="1.4"/>
<path d="M473.5,67 H479.5" stroke="#2050c0" stroke-width="2"/>
<rect x="497.5" y="62.5" width="14" height="13" fill="#d5e2f3" stroke="#111" stroke-width="1.6"/><path d="M495.5,60.5 l4,0 l-4,4z M513.5,60.5 l-4,0 l4,4z M495.5,77.5 l4,0 l-4,-4z M513.5,77.5 l-4,0 l4,-4z" fill="#111"/>
<rect x="524" y="63" width="16" height="13" rx="2" fill="#d5e2f3" stroke="#333" stroke-width="1.2"/><text x="532" y="72.5" font-size="7.5" font-weight="bold" text-anchor="middle" fill="#111">1:1</text>
<rect x="555.5" y="67" width="18" height="11" fill="#c8dcf0"/><path d="M556,78 L561,72 L565,75.5 L569,71 L573,78 Z" fill="#6a98c8"/><path d="M565,64 Q569,59 573,63" fill="none" stroke="#222" stroke-width="1.1"/><path d="M571.5,61.5 L574,64 L570.5,64.5 Z" fill="#222"/>
<path d="M580,75 L585,71 H603 L598,75 Z" fill="#5a8ae0" stroke="#3050a0" stroke-width="0.6"/><path d="M580,71 L585,67 H603 L598,71 Z" fill="#20c020" stroke="#107010" stroke-width="0.6"/><path d="M580,67.5 L585,62.5 H603 L598,67.5 Z" fill="#e02020" stroke="#801010" stroke-width="0.6"/>
<path d="M613,63 H636 M613,76.5 H636 M624.5,59.5 V80" stroke="#e00000" stroke-width="1.2"/><rect x="618.5" y="64.5" width="12" height="11" rx="3" fill="#e00000"/><text x="624.5" y="73.5" font-size="9" font-weight="bold" text-anchor="middle" fill="#fff">h</text>
<rect x="645.5" y="65.5" width="11" height="10" rx="1.5" fill="none" stroke="#b8b8b8" stroke-width="1"/><text x="651" y="73.5" font-size="8" text-anchor="middle" fill="#b0b0b0">h</text><path d="M647,63 L651,59.5 L655,63 Z" fill="none" stroke="#b8b8b8" stroke-width="0.9"/>
<rect x="672" y="66.5" width="11" height="10" rx="1.5" fill="none" stroke="#b8b8b8" stroke-width="1"/><text x="677.5" y="74.5" font-size="8" text-anchor="middle" fill="#b0b0b0">h</text><path d="M673.5,78.5 L677.5,82 L681.5,78.5 Z" fill="none" stroke="#b8b8b8" stroke-width="0.9"/>
<rect x="698.5" y="64.5" width="11" height="11.5" rx="2" fill="#fff0f0" stroke="#e00000" stroke-width="1.3"/><path d="M701,67 H707 M704,67 V73.5 M701,73.5 H707" stroke="#e00000" stroke-width="1"/>
<path d="M726,72.5 H748.5 M727,72.5 L731,64 H743.5 L747.5,72.5 M731,64 L735,72.5 L739,64 L743,72.5" fill="none" stroke="#222" stroke-width="1.3"/><path d="M727,72.5 V77 M747.5,72.5 V77" stroke="#222" stroke-width="1.5"/>
<path d="M756,78 V66 Q756,60.5 764,60.5 Q772,60.5 772,66 V78 L764,73 Z" fill="#8a8a8a" stroke="#222" stroke-width="1.2" stroke-dasharray="1.4,1.6"/>
<path d="M782,63 H799.5 M782,68.5 H799.5 M782,61 V70 M799.5,61 V70" stroke="#111" stroke-width="1.3"/><rect x="782.5" y="73" width="17" height="4.5" fill="none" stroke="#b0b0b0" stroke-width="1"/><path d="M807,69 H812.5 L809.75,72 Z" fill="#111"/>
<path d="M824.5,67.5 L838,60 L847,63.5 L846.5,71.5 L833,79 L825,75.5 Z" fill="#f0c020" stroke="#3a2e00" stroke-width="1"/><path d="M824.5,67.5 L833,71 L847,63.5 M833,71 V79" fill="none" stroke="#3a2e00" stroke-width="0.8"/><circle cx="829" cy="73" r="1.3" fill="#222"/><circle cx="843" cy="68.5" r="1.2" fill="#222"/><path d="M834,64 L840,61" stroke="#222" stroke-width="1.4"/>
<ellipse cx="866" cy="64" rx="5" ry="4" fill="#505050" transform="rotate(20 866 64)"/><path d="M870,65 Q872,72 866,74" fill="#a8a8a8" opacity="0.7"/><circle cx="866" cy="65" r="4.5" fill="#606060"/><circle cx="866.5" cy="65.5" r="3" fill="#f0b020"/><path d="M863,70 L853,78.5" stroke="#f0b020" stroke-width="2.4"/><path d="M863,70 L853,78.5" stroke="#7a5a00" stroke-width="0.5"/>
<path d="M883.5,77.5 L889,71.5 H906 L900,77.5 Z" fill="#20c020" stroke="#0a5a0a" stroke-width="0.7"/><text x="896" y="73" font-size="10.5" font-weight="bold" text-anchor="middle" fill="#000" textLength="17" lengthAdjust="spacingAndGlyphs">3D</text>
<path d="M6.5,113.5 L8,117 L11.5,117.3 L8.8,119.7 L9.7,123.2 L6.5,121.2 L3.3,123.2 L4.2,119.7 L1.5,117.3 L5,117 Z" fill="#f8a818" stroke="#e08000" stroke-width="0.4"/>
<text x="14" y="123" font-size="10" fill="#222" textLength="45" lengthAdjust="spacingAndGlyphs">Trix-HO-C</text>
<path d="M6.5,133.5 L8,137 L11.5,137.3 L8.8,139.7 L9.7,143.2 L6.5,141.2 L3.3,143.2 L4.2,139.7 L1.5,137.3 L5,137 Z" fill="#f8a818" stroke="#e08000" stroke-width="0.4"/>
<text x="14" y="143" font-size="10" fill="#222" textLength="62" lengthAdjust="spacingAndGlyphs">Roco-HO-25-B</text>
<path d="M6.5,153.5 L8,157 L11.5,157.3 L8.8,159.7 L9.7,163.2 L6.5,161.2 L3.3,163.2 L4.2,159.7 L1.5,157.3 L5,157 Z" fill="#f8a818" stroke="#e08000" stroke-width="0.4"/>
<text x="14" y="163" font-size="10" fill="#222" textLength="48" lengthAdjust="spacingAndGlyphs">PIKO-HO-S</text>
<path d="M6.5,173.5 L8,177 L11.5,177.3 L8.8,179.7 L9.7,183.2 L6.5,181.2 L3.3,183.2 L4.2,179.7 L1.5,177.3 L5,177 Z" fill="#f8a818" stroke="#e08000" stroke-width="0.4"/>
<text x="14" y="183" font-size="10" fill="#222" textLength="50" lengthAdjust="spacingAndGlyphs">PIKO-HO-M</text>
<rect x="0" y="188.5" width="82" height="1" fill="#c8c8c8"/>
<path d="M2,200.5H80M2,204.3H80" stroke="#333" stroke-width="1.1"/>
<path d="M2,233H80M2,236.8H80" stroke="#333" stroke-width="1.1"/>
<path d="M2,264.5H80M2,268.3H80" stroke="#333" stroke-width="1.1"/>
<text x="40.5" y="218" font-size="10" fill="#222" text-anchor="middle" textLength="36" lengthAdjust="spacingAndGlyphs">F4/Wood</text>
<text x="40.5" y="250.7" font-size="10" fill="#222" text-anchor="middle" textLength="54" lengthAdjust="spacingAndGlyphs">F4/Concrete</text>
<text x="40.5" y="282" font-size="10" fill="#222" text-anchor="middle">G4</text>
<path d="M16.5,295.9H64.5M16.5,299.1H64.5M16.5,294.5V300.5M64.5,294.5V300.5" stroke="#222" stroke-width="1.1" fill="none"/>
<text x="40.5" y="314.2" font-size="10" fill="#222" text-anchor="middle">G1</text>
<path d="M28.5,328.09999999999997H53M28.5,331.3H53M28.5,326.7V332.7M53,326.7V332.7" stroke="#222" stroke-width="1.1" fill="none"/>
<text x="40.5" y="346" font-size="10" fill="#222" text-anchor="middle">DG1</text>
<path d="M28.5,359.9H53M28.5,363.1H53M28.5,358.5V364.5M53,358.5V364.5" stroke="#222" stroke-width="1.1" fill="none"/>
<text x="40.5" y="378" font-size="10" fill="#222" text-anchor="middle">G1/2</text>
<path d="M34.6,391.79999999999995H46.7M34.6,395.0H46.7M34.6,390.4V396.4M46.7,390.4V396.4" stroke="#222" stroke-width="1.1" fill="none"/>
<text x="40.5" y="409.8" font-size="10" fill="#222" text-anchor="middle">G1/4</text>
<path d="M40.5,422.5V429M40.5,454.5V461M40.5,486.5V493M40.5,518.5V525" stroke="#111" stroke-width="2"/>
<text x="40.5" y="442.2" font-size="10" fill="#222" text-anchor="middle">D2</text>
<text x="40.5" y="474" font-size="10" fill="#222" text-anchor="middle">D4</text>
<text x="40.5" y="506.2" font-size="10" fill="#222" text-anchor="middle">D5</text>
<text x="40.5" y="538" font-size="10" fill="#222" text-anchor="middle">D8</text>
<path d="M38.8,550.5V556.5M42.6,550.5V556.5M38.8,552.5H42.6M38.8,554.5H42.6" stroke="#222" stroke-width="0.9"/>
<text x="40.5" y="570" font-size="10" fill="#222" text-anchor="middle">D12</text>
<rect x="34.5" y="578.5" width="16" height="3.5" fill="#c0c0c0" stroke="#222" stroke-width="1"/>
<path d="M27.8,584.4H53M27.8,587.6H53M27.8,583V589M53,583V589" stroke="#222" stroke-width="1.1" fill="none"/>
<text x="40.5" y="601.9" font-size="10" fill="#222" text-anchor="middle" textLength="32" lengthAdjust="spacingAndGlyphs">G1/2-U</text>
<path d="M27.8,616.1999999999999H53M27.8,619.4H53M27.8,614.8V620.8M53,614.8V620.8" stroke="#222" stroke-width="1.1" fill="none"/>
<text x="40.5" y="633.8" font-size="10" fill="#222" text-anchor="middle" textLength="32" lengthAdjust="spacingAndGlyphs">G1/2-F</text>
<path d="M34.2,648.1H46.7M34.2,651.3000000000001H46.7M34.2,646.7V652.7M46.7,646.7V652.7" stroke="#222" stroke-width="1.1" fill="none"/>
<text x="40.5" y="665.6" font-size="10" fill="#222" text-anchor="middle" textLength="32" lengthAdjust="spacingAndGlyphs">G1/4-T</text>
<path d="M19.5,683.5 Q40.6,674.9000000000001 61.7,683.5" fill="none" stroke="#222" stroke-width="1"/>
<path d="M21.0,686.5 Q40.6,677.9000000000001 60.2,686.5" fill="none" stroke="#222" stroke-width="1"/>
<path d="M19.5,682.5L21.0,687.5M61.7,682.5L60.2,687.5" stroke="#222" stroke-width="1"/>
<text x="40.5" y="697.7" font-size="10" fill="#222" text-anchor="middle">R2</text>
<path d="M35.7,711.6999999999999H45.5M35.7,714.9H45.5M35.7,710.8V715.8M45.5,710.8V715.8" stroke="#222" stroke-width="1.1" fill="none"/>
<text x="40.5" y="729.5" font-size="10" fill="#222" text-anchor="middle" textLength="30" lengthAdjust="spacingAndGlyphs">R2/7,5</text>
<path d="M16.2,747.5 Q40.6,738.7 65,747.5" fill="none" stroke="#222" stroke-width="1"/>
<path d="M17.7,750.5 Q40.6,741.7 63.5,750.5" fill="none" stroke="#222" stroke-width="1"/>
<path d="M16.2,746.5L17.7,751.5M65,746.5L63.5,751.5" stroke="#222" stroke-width="1"/>
<text x="40.5" y="762" font-size="10" fill="#222" text-anchor="middle">R3</text>
<path d="M34.6,775.4H46.5M34.6,778.6H46.5M34.6,774.5V779.5M46.5,774.5V779.5" stroke="#222" stroke-width="1.1" fill="none"/>
<text x="40.5" y="793.8" font-size="10" fill="#222" text-anchor="middle" textLength="30" lengthAdjust="spacingAndGlyphs">R3/7,5</text>
<path d="M13,811.5 Q40.6,802.3 68.2,811.5" fill="none" stroke="#222" stroke-width="1"/>
<path d="M14.5,814.5 Q40.6,805.3 66.7,814.5" fill="none" stroke="#222" stroke-width="1"/>
<path d="M13,810.5L14.5,815.5M68.2,810.5L66.7,815.5" stroke="#222" stroke-width="1"/>
<text x="40.5" y="825.8" font-size="10" fill="#222" text-anchor="middle">R4</text>
<path d="M9.7,842 Q40.550000000000004,833.8 71.4,842" fill="none" stroke="#222" stroke-width="1"/>
<path d="M11.2,845 Q40.550000000000004,836.8 69.9,845" fill="none" stroke="#222" stroke-width="1"/>
<path d="M9.7,841L11.2,846M71.4,841L69.9,846" stroke="#222" stroke-width="1"/>
<path d="M37.5,850.5H43.5L40.5,853.5Z" fill="#111"/>
</svg></body></html>
